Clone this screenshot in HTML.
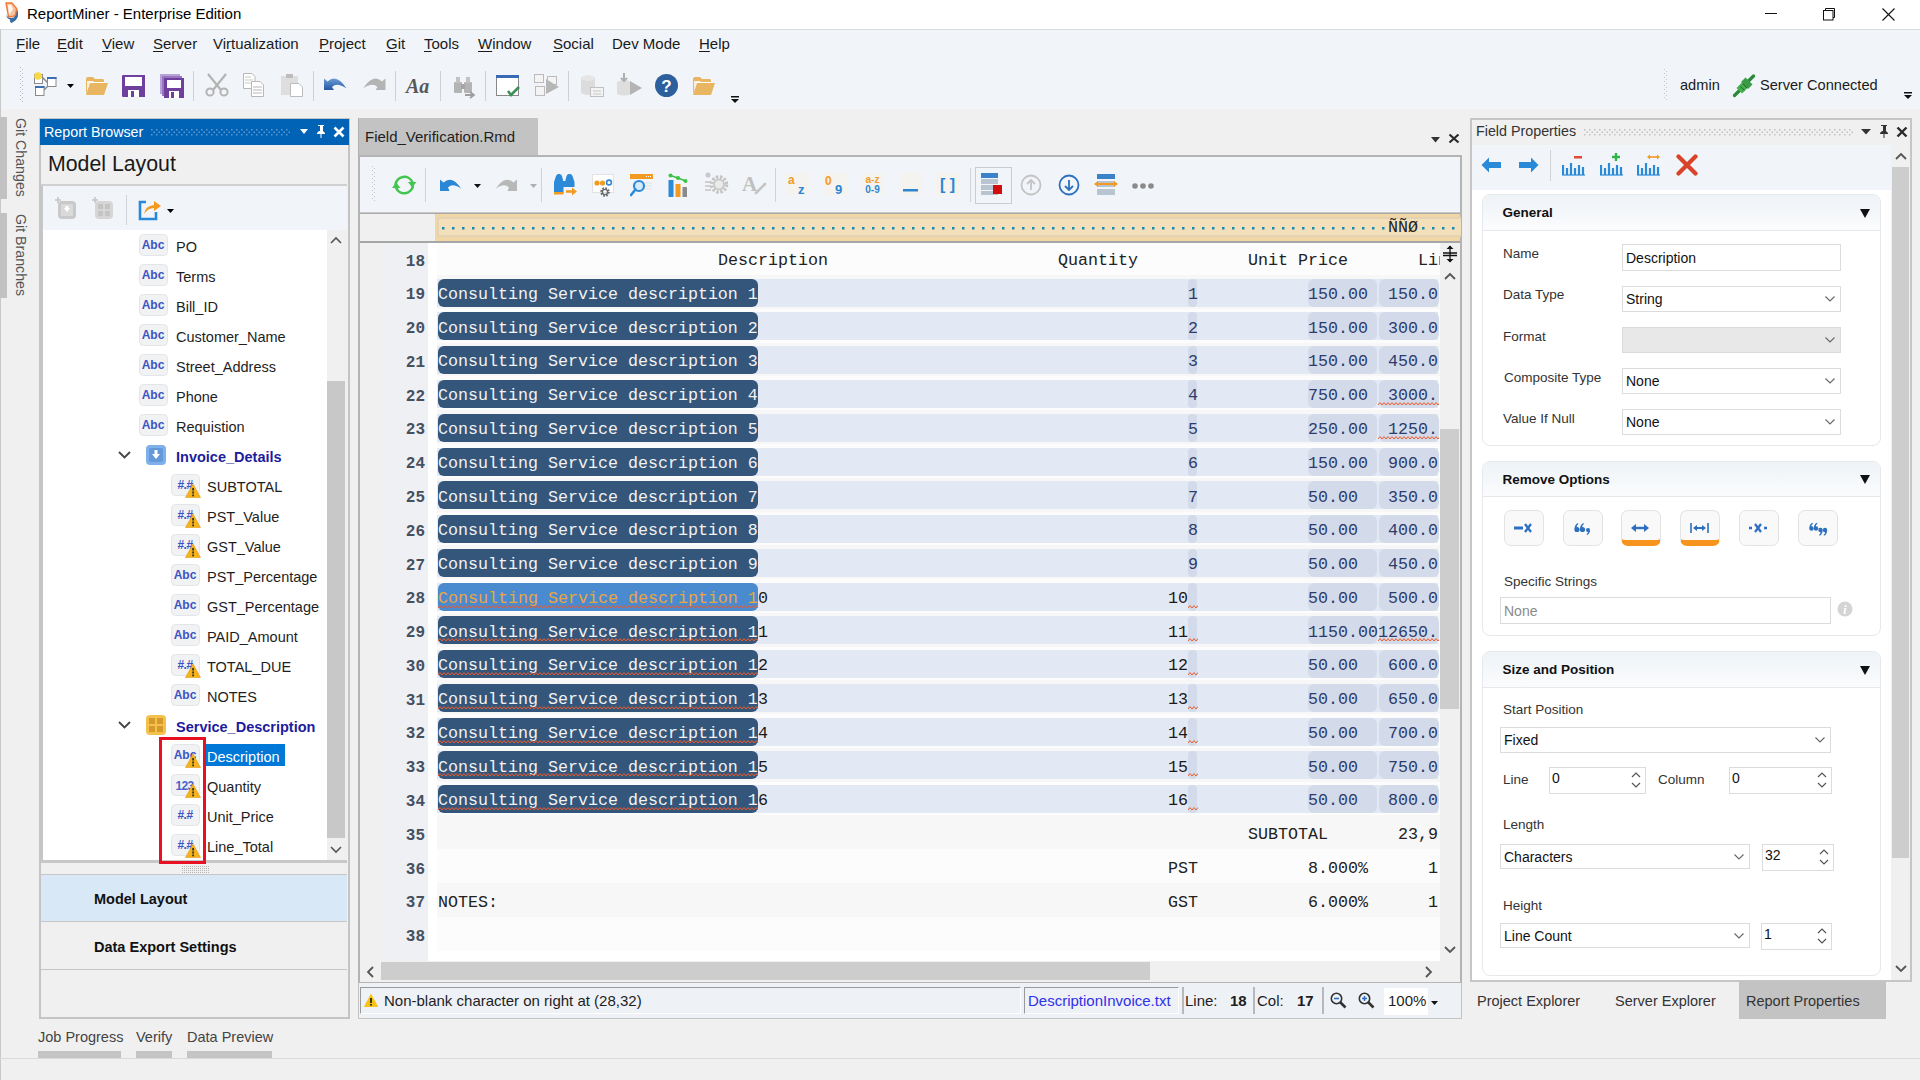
<!DOCTYPE html>
<html><head><meta charset="utf-8">
<style>
*{box-sizing:border-box;margin:0;padding:0}
html,body{width:1920px;height:1080px;overflow:hidden}
body{position:relative;background:#f0f0f0;font-family:"Liberation Sans",sans-serif;font-size:15px;color:#1e1e1e}
.a{position:absolute}
.t{position:absolute;white-space:nowrap;line-height:1}
.mono{font-family:"Liberation Mono",monospace}
u{text-decoration:underline;text-underline-offset:1.5px;text-decoration-thickness:1px}
</style></head><body>

<div class="a" style="left:0px;top:0px;width:1920px;height:29px;background:#fff"></div>
<svg class="a" style="left:0px;top:0px;" width="22" height="26" viewBox="0 0 22 26"><path d="M6 14.5 Q8 19 14 17.5 L17 8 Q18.5 12 18 16.5 Q16 21 11.5 23 Q9.5 22 10 19.5 Q7 19 6 14.5Z" fill="#3b6b9f"/><path d="M6 3 H12 L16.5 8.5 L15.5 15 Q12 17.5 8.5 16.5 Z" fill="#f9c4a0" stroke="#ee7a3c" stroke-width="1.4" stroke-linejoin="round"/><path d="M8 5 H11 L13 9 L10 13.5 L9 15Z" fill="#fff" opacity="0.85"/></svg>
<div class="t" style="left:27px;top:6px;font-size:15px;color:#000;font-weight:normal;">ReportMiner - Enterprise Edition</div>
<div class="a" style="left:1765px;top:13px;width:12px;height:1px;background:#111"></div>
<svg class="a" style="left:1823px;top:8px;" width="13" height="13" viewBox="0 0 13 13"><rect x="0.5" y="2.5" width="9.5" height="9.5" fill="none" stroke="#111"/><path d="M2.5 2.5 V0.5 H11.5 V9.5 H10" fill="none" stroke="#111"/></svg>
<svg class="a" style="left:1882px;top:8px;" width="13" height="13" viewBox="0 0 13 13"><path d="M0.5 0.5 L12.5 12.5 M12.5 0.5 L0.5 12.5" stroke="#111" stroke-width="1.1"/></svg>
<div class="a" style="left:0px;top:29px;width:1920px;height:80px;background:#f1f5f9;border-top:1px solid #d9dcdf"></div>
<div class="a" style="left:0px;top:29px;width:1px;height:1051px;background:#c9c9c9"></div>
<div class="t" style="left:16px;top:36px;font-size:15px;color:#1a1a1a;font-weight:normal;"><u>F</u>ile</div>
<div class="t" style="left:57px;top:36px;font-size:15px;color:#1a1a1a;font-weight:normal;"><u>E</u>dit</div>
<div class="t" style="left:102px;top:36px;font-size:15px;color:#1a1a1a;font-weight:normal;"><u>V</u>iew</div>
<div class="t" style="left:153px;top:36px;font-size:15px;color:#1a1a1a;font-weight:normal;"><u>S</u>erver</div>
<div class="t" style="left:213px;top:36px;font-size:15px;color:#1a1a1a;font-weight:normal;">Vi<u>r</u>tualization</div>
<div class="t" style="left:319px;top:36px;font-size:15px;color:#1a1a1a;font-weight:normal;"><u>P</u>roject</div>
<div class="t" style="left:386px;top:36px;font-size:15px;color:#1a1a1a;font-weight:normal;"><u>G</u>it</div>
<div class="t" style="left:424px;top:36px;font-size:15px;color:#1a1a1a;font-weight:normal;"><u>T</u>ools</div>
<div class="t" style="left:478px;top:36px;font-size:15px;color:#1a1a1a;font-weight:normal;"><u>W</u>indow</div>
<div class="t" style="left:553px;top:36px;font-size:15px;color:#1a1a1a;font-weight:normal;"><u>S</u>ocial</div>
<div class="t" style="left:612px;top:36px;font-size:15px;color:#1a1a1a;font-weight:normal;">Dev Mode</div>
<div class="t" style="left:699px;top:36px;font-size:15px;color:#1a1a1a;font-weight:normal;"><u>H</u>elp</div>
<svg class="a" style="left:20px;top:67px;" width="3" height="36" viewBox="0 0 3 36"><rect x="0" y="0" width="1" height="1" fill="#b8bcc2"/><rect x="2" y="2" width="1" height="1" fill="#b8bcc2"/><rect x="0" y="4" width="1" height="1" fill="#b8bcc2"/><rect x="2" y="6" width="1" height="1" fill="#b8bcc2"/><rect x="0" y="8" width="1" height="1" fill="#b8bcc2"/><rect x="2" y="10" width="1" height="1" fill="#b8bcc2"/><rect x="0" y="12" width="1" height="1" fill="#b8bcc2"/><rect x="2" y="14" width="1" height="1" fill="#b8bcc2"/><rect x="0" y="16" width="1" height="1" fill="#b8bcc2"/><rect x="2" y="18" width="1" height="1" fill="#b8bcc2"/><rect x="0" y="20" width="1" height="1" fill="#b8bcc2"/><rect x="2" y="22" width="1" height="1" fill="#b8bcc2"/><rect x="0" y="24" width="1" height="1" fill="#b8bcc2"/><rect x="2" y="26" width="1" height="1" fill="#b8bcc2"/><rect x="0" y="28" width="1" height="1" fill="#b8bcc2"/><rect x="2" y="30" width="1" height="1" fill="#b8bcc2"/><rect x="0" y="32" width="1" height="1" fill="#b8bcc2"/><rect x="2" y="34" width="1" height="1" fill="#b8bcc2"/></svg>
<svg class="a" style="left:34px;top:72px;" width="24" height="24" viewBox="0 0 24 24">
<rect x="0.5" y="2.5" width="8" height="9" fill="#fff" stroke="#8a8a8a"/>
<circle cx="4" cy="4" r="3.8" fill="#f6d84a"/>
<path d="M8 5 L14 11 M10 18 L14 14" stroke="#8a8a8a" stroke-width="1.5" fill="none"/>
<rect x="13.5" y="5.5" width="8.5" height="9" fill="#fff" stroke="#8a8a8a"/><rect x="13" y="5" width="9.5" height="2" fill="#3a6fb5"/>
<rect x="1.5" y="14.5" width="8.5" height="9" fill="#fff" stroke="#8a8a8a"/><rect x="1" y="14" width="9.5" height="2" fill="#3a6fb5"/>
</svg>
<svg class="a" style="left:67px;top:84px;" width="7" height="4" viewBox="0 0 7 4"><path d="M0 0 H7 L3.5 4 Z" fill="#000"/></svg>
<svg class="a" style="left:85px;top:76px;" width="24" height="20" viewBox="0 0 24 20"><path d="M1 3 Q1 1 3 1 H8 L10 3 H18 Q19 3 19 5 V6 H5 L1 18 Z" fill="#e8b560"/><path d="M2 5 H8 L9 6 H18 V8 H5 L2 15Z" fill="#fff" opacity="0.8"/><path d="M5 7 H23 L19 19 H1 Z" fill="#e8b560"/></svg>
<svg class="a" style="left:122px;top:75px;" width="24" height="23" viewBox="0 0 24 23"><path d="M0 1 Q0 0 1 0 H23 V22 H1 Q0 22 0 21Z" fill="#6e3f9c"/><rect x="3" y="2" width="17" height="9" fill="#fff"/><rect x="6" y="15" width="11" height="7" fill="#fff"/><rect x="9" y="16" width="3" height="6" fill="#6e3f9c"/></svg>
<svg class="a" style="left:160px;top:74px;" width="24" height="24" viewBox="0 0 24 24"><path d="M0 0 H20 V20 H0Z" fill="#b9a3d6"/><path d="M2 2 H22 V22 H2Z" fill="#9777c0"/><path d="M4 4 H24 V24 H4Z" fill="#6e3f9c"/><rect x="7" y="6" width="14" height="8" fill="#fff"/><rect x="9" y="17" width="10" height="7" fill="#fff"/><rect x="11" y="18" width="3" height="6" fill="#6e3f9c"/></svg>
<div class="a" style="left:193px;top:71px;width:1px;height:30px;background:#cdd1d6"></div>
<svg class="a" style="left:205px;top:73px;" width="24" height="24" viewBox="0 0 24 24"><path d="M3 1 L16 17 M21 1 L8 17" stroke="#b3b3b3" stroke-width="2.2"/><circle cx="5" cy="19" r="3.6" fill="none" stroke="#b3b3b3" stroke-width="2"/><circle cx="19" cy="19" r="3.6" fill="none" stroke="#b3b3b3" stroke-width="2"/></svg>
<svg class="a" style="left:243px;top:73px;" width="22" height="24" viewBox="0 0 22 24"><path d="M0.5 0.5 H9 L12 3.5 V15.5 H0.5Z" fill="#fff" stroke="#b8b8b8"/><path d="M2 4 H8 M2 7 H10 M2 10 H10" stroke="#c8c8c8"/><path d="M8.5 8.5 H17 L20.5 12 V23.5 H8.5Z" fill="#fff" stroke="#b8b8b8"/><path d="M10 14 H19 M10 17 H19 M10 20 H19" stroke="#b8b8b8"/></svg>
<svg class="a" style="left:281px;top:73px;" width="23" height="24" viewBox="0 0 23 24"><rect x="0" y="3" width="17" height="19" fill="#dedede"/><rect x="5" y="1" width="7" height="4" fill="#bdbdbd"/><path d="M9.5 10.5 H18 L21.5 14 V23.5 H9.5Z" fill="#fff" stroke="#bdbdbd"/></svg>
<div class="a" style="left:313px;top:71px;width:1px;height:30px;background:#cdd1d6"></div>
<svg class="a" style="left:323px;top:77px;" width="25" height="14" viewBox="0 0 25 14"><defs><linearGradient id="ug" x1="0" y1="0" x2="0" y2="1"><stop offset="0" stop-color="#6a9bd6"/><stop offset="1" stop-color="#2557a3"/></linearGradient></defs><path d="M1 1.5 L4.5 4.5 Q13.5 -4 23.5 11.5 Q14 5 9 10 L11 13 H1 Z" fill="url(#ug)"/></svg>
<svg class="a" style="left:362px;top:77px;" width="25" height="14" viewBox="0 0 25 14"><path d="M23.5 1.5 L20 4.5 Q11 -4 1 11.5 Q10.5 5 15.5 10 L13.5 13 H23.5 Z" fill="#b4b4b4"/></svg>
<div class="a" style="left:395px;top:71px;width:1px;height:30px;background:#cdd1d6"></div>
<div class="t" style="left:406px;top:76px;font-size:20px;color:#585858;font-weight:normal;font-family:'Liberation Serif',serif;"><i><b>Aa</b></i></div>
<div class="a" style="left:440px;top:71px;width:1px;height:30px;background:#cdd1d6"></div>
<svg class="a" style="left:453px;top:76px;" width="23" height="23" viewBox="0 0 23 23"><rect x="1" y="6" width="8" height="11" rx="1" fill="#b4b4b4"/><rect x="11" y="6" width="8" height="11" rx="1" fill="#b4b4b4"/><rect x="3" y="1" width="4" height="6" fill="#c2c2c2"/><rect x="13" y="1" width="4" height="6" fill="#c2c2c2"/><rect x="8" y="8" width="4" height="5" fill="#a5a5a5"/><path d="M12 19 H20 M17 16 L21 19 L17 22" stroke="#9e9e9e" stroke-width="1.8" fill="none"/></svg>
<div class="a" style="left:485px;top:71px;width:1px;height:30px;background:#cdd1d6"></div>
<svg class="a" style="left:496px;top:75px;" width="25" height="22" viewBox="0 0 25 22"><rect x="0.5" y="0.5" width="22" height="20" fill="#fff" stroke="#888"/><rect x="0" y="0" width="23" height="3" fill="#3a6ab3"/><path d="M12 16 L15 20 L23 12" stroke="#3d8f5a" stroke-width="2.6" fill="none"/></svg>
<svg class="a" style="left:534px;top:74px;" width="26" height="23" viewBox="0 0 26 23"><rect x="0.5" y="0.5" width="9" height="8" fill="#f4f4f4" stroke="#bbb"/><rect x="1.5" y="12.5" width="9" height="9" fill="#f4f4f4" stroke="#bbb"/><rect x="13.5" y="2.5" width="9" height="8" fill="#f4f4f4" stroke="#bbb"/><path d="M12 5 L25 13 L12 20Z" fill="#b6b6b6"/></svg>
<div class="a" style="left:568px;top:71px;width:1px;height:30px;background:#cdd1d6"></div>
<svg class="a" style="left:581px;top:74px;" width="24" height="24" viewBox="0 0 24 24"><path d="M0 4 Q7 -1 14 4 V19 Q7 23 0 19Z" fill="#dcdcdc"/><ellipse cx="7" cy="4" rx="7" ry="3" fill="#e6e6e6"/><rect x="9.5" y="13.5" width="13" height="9" fill="#f3f3f3" stroke="#c0c0c0"/><path d="M12 17 H20 M12 20 H20" stroke="#c8c8c8"/></svg>
<svg class="a" style="left:617px;top:73px;" width="25" height="24" viewBox="0 0 25 24"><path d="M0 9 Q7 5 14 9 V21 Q7 24 0 21Z" fill="#dedede"/><path d="M7 0 V8 M4 5 L7 8 L10 5" stroke="#b0b0b0" stroke-width="2" fill="none"/><path d="M13 8 L25 15 L13 22Z" fill="#b4b4b4"/></svg>
<svg class="a" style="left:655px;top:74px;" width="23" height="23" viewBox="0 0 23 23"><circle cx="11.5" cy="11.5" r="11.5" fill="#2d5f9d"/><text x="11.5" y="18" font-family="Liberation Sans" font-weight="bold" font-size="17" text-anchor="middle" fill="#fff">?</text></svg>
<svg class="a" style="left:692px;top:76px;" width="24" height="20" viewBox="0 0 24 20"><path d="M1 3 Q1 1 3 1 H8 L10 3 H18 Q19 3 19 5 V6 H5 L1 18 Z" fill="#e8b560"/><path d="M2 5 H8 L9 6 H18 V8 H5 L2 15Z" fill="#fff" opacity="0.8"/><path d="M5 7 H23 L19 19 H1 Z" fill="#e8b560"/></svg>
<svg class="a" style="left:731px;top:96px;" width="8" height="7" viewBox="0 0 8 7"><rect x="0" y="0" width="8" height="1.5" fill="#111"/><path d="M0 3 H8 L4 7Z" fill="#111"/></svg>
<svg class="a" style="left:1664px;top:69px;" width="3" height="32" viewBox="0 0 3 32"><rect x="0" y="0" width="1" height="1" fill="#c4c7cc"/><rect x="2" y="2" width="1" height="1" fill="#c4c7cc"/><rect x="0" y="4" width="1" height="1" fill="#c4c7cc"/><rect x="2" y="6" width="1" height="1" fill="#c4c7cc"/><rect x="0" y="8" width="1" height="1" fill="#c4c7cc"/><rect x="2" y="10" width="1" height="1" fill="#c4c7cc"/><rect x="0" y="12" width="1" height="1" fill="#c4c7cc"/><rect x="2" y="14" width="1" height="1" fill="#c4c7cc"/><rect x="0" y="16" width="1" height="1" fill="#c4c7cc"/><rect x="2" y="18" width="1" height="1" fill="#c4c7cc"/><rect x="0" y="20" width="1" height="1" fill="#c4c7cc"/><rect x="2" y="22" width="1" height="1" fill="#c4c7cc"/><rect x="0" y="24" width="1" height="1" fill="#c4c7cc"/><rect x="2" y="26" width="1" height="1" fill="#c4c7cc"/><rect x="0" y="28" width="1" height="1" fill="#c4c7cc"/><rect x="2" y="30" width="1" height="1" fill="#c4c7cc"/></svg>
<div class="t" style="left:1680px;top:77.5px;font-size:14.6px;color:#1a1a1a;font-weight:normal;">admin</div>
<svg class="a" style="left:1732px;top:74px;" width="24" height="24" viewBox="0 0 24 24"><path d="M2.5 21.5 L7 17" stroke="#2a8a3a" stroke-width="3.2" stroke-linecap="round"/><path d="M16.5 7 L21.5 2" stroke="#2a8a3a" stroke-width="3.2" stroke-linecap="round"/><path d="M4.5 14 L10 8.5 L15.5 14 L10 19.5Z" fill="#46ad4f"/><path d="M9 8 L13.5 3.5 L20.5 10.5 L16 15Z" fill="#3a9a45"/><path d="M8.5 12.5 L12.5 16.5 M11 10 L15 14" stroke="#1e6628" stroke-width="1"/></svg>
<div class="t" style="left:1760px;top:77.5px;font-size:14.6px;color:#1a1a1a;font-weight:normal;">Server Connected</div>
<svg class="a" style="left:1904px;top:92px;" width="8" height="7" viewBox="0 0 8 7"><rect x="0" y="0" width="8" height="1.5" fill="#111"/><path d="M0 3 H8 L4 7Z" fill="#111"/></svg>
<div class="a" style="left:0px;top:117px;width:7px;height:82px;background:#c2c2c2"></div>
<div class="a" style="left:0px;top:213px;width:7px;height:85px;background:#c2c2c2"></div>
<div class="t" style="left:28px;top:118px;font-size:14.2px;color:#555;transform-origin:0 0;transform:rotate(90deg)">Git Changes</div>
<div class="t" style="left:28px;top:214px;font-size:14.2px;color:#555;transform-origin:0 0;transform:rotate(90deg)">Git Branches</div>
<div class="a" style="left:39px;top:118px;width:311px;height:901px;border:2px solid #c4c4c4;background:#f0f0f0"></div>
<div class="a" style="left:40px;top:119px;width:309px;height:26px;background:#0063b6"></div>
<div class="t" style="left:44px;top:124.5px;font-size:14.3px;color:#fff;font-weight:normal;">Report Browser</div>
<svg class="a" style="left:151px;top:129px;" width="140" height="7" viewBox="0 0 140 7"><rect x="0" y="0" width="1.5" height="1.5" fill="#5f97d2"/><rect x="0" y="5" width="1.5" height="1.5" fill="#5f97d2"/><rect x="2.5" y="2.5" width="1.5" height="1.5" fill="#5f97d2"/><rect x="5" y="0" width="1.5" height="1.5" fill="#5f97d2"/><rect x="5" y="5" width="1.5" height="1.5" fill="#5f97d2"/><rect x="7.5" y="2.5" width="1.5" height="1.5" fill="#5f97d2"/><rect x="10" y="0" width="1.5" height="1.5" fill="#5f97d2"/><rect x="10" y="5" width="1.5" height="1.5" fill="#5f97d2"/><rect x="12.5" y="2.5" width="1.5" height="1.5" fill="#5f97d2"/><rect x="15" y="0" width="1.5" height="1.5" fill="#5f97d2"/><rect x="15" y="5" width="1.5" height="1.5" fill="#5f97d2"/><rect x="17.5" y="2.5" width="1.5" height="1.5" fill="#5f97d2"/><rect x="20" y="0" width="1.5" height="1.5" fill="#5f97d2"/><rect x="20" y="5" width="1.5" height="1.5" fill="#5f97d2"/><rect x="22.5" y="2.5" width="1.5" height="1.5" fill="#5f97d2"/><rect x="25" y="0" width="1.5" height="1.5" fill="#5f97d2"/><rect x="25" y="5" width="1.5" height="1.5" fill="#5f97d2"/><rect x="27.5" y="2.5" width="1.5" height="1.5" fill="#5f97d2"/><rect x="30" y="0" width="1.5" height="1.5" fill="#5f97d2"/><rect x="30" y="5" width="1.5" height="1.5" fill="#5f97d2"/><rect x="32.5" y="2.5" width="1.5" height="1.5" fill="#5f97d2"/><rect x="35" y="0" width="1.5" height="1.5" fill="#5f97d2"/><rect x="35" y="5" width="1.5" height="1.5" fill="#5f97d2"/><rect x="37.5" y="2.5" width="1.5" height="1.5" fill="#5f97d2"/><rect x="40" y="0" width="1.5" height="1.5" fill="#5f97d2"/><rect x="40" y="5" width="1.5" height="1.5" fill="#5f97d2"/><rect x="42.5" y="2.5" width="1.5" height="1.5" fill="#5f97d2"/><rect x="45" y="0" width="1.5" height="1.5" fill="#5f97d2"/><rect x="45" y="5" width="1.5" height="1.5" fill="#5f97d2"/><rect x="47.5" y="2.5" width="1.5" height="1.5" fill="#5f97d2"/><rect x="50" y="0" width="1.5" height="1.5" fill="#5f97d2"/><rect x="50" y="5" width="1.5" height="1.5" fill="#5f97d2"/><rect x="52.5" y="2.5" width="1.5" height="1.5" fill="#5f97d2"/><rect x="55" y="0" width="1.5" height="1.5" fill="#5f97d2"/><rect x="55" y="5" width="1.5" height="1.5" fill="#5f97d2"/><rect x="57.5" y="2.5" width="1.5" height="1.5" fill="#5f97d2"/><rect x="60" y="0" width="1.5" height="1.5" fill="#5f97d2"/><rect x="60" y="5" width="1.5" height="1.5" fill="#5f97d2"/><rect x="62.5" y="2.5" width="1.5" height="1.5" fill="#5f97d2"/><rect x="65" y="0" width="1.5" height="1.5" fill="#5f97d2"/><rect x="65" y="5" width="1.5" height="1.5" fill="#5f97d2"/><rect x="67.5" y="2.5" width="1.5" height="1.5" fill="#5f97d2"/><rect x="70" y="0" width="1.5" height="1.5" fill="#5f97d2"/><rect x="70" y="5" width="1.5" height="1.5" fill="#5f97d2"/><rect x="72.5" y="2.5" width="1.5" height="1.5" fill="#5f97d2"/><rect x="75" y="0" width="1.5" height="1.5" fill="#5f97d2"/><rect x="75" y="5" width="1.5" height="1.5" fill="#5f97d2"/><rect x="77.5" y="2.5" width="1.5" height="1.5" fill="#5f97d2"/><rect x="80" y="0" width="1.5" height="1.5" fill="#5f97d2"/><rect x="80" y="5" width="1.5" height="1.5" fill="#5f97d2"/><rect x="82.5" y="2.5" width="1.5" height="1.5" fill="#5f97d2"/><rect x="85" y="0" width="1.5" height="1.5" fill="#5f97d2"/><rect x="85" y="5" width="1.5" height="1.5" fill="#5f97d2"/><rect x="87.5" y="2.5" width="1.5" height="1.5" fill="#5f97d2"/><rect x="90" y="0" width="1.5" height="1.5" fill="#5f97d2"/><rect x="90" y="5" width="1.5" height="1.5" fill="#5f97d2"/><rect x="92.5" y="2.5" width="1.5" height="1.5" fill="#5f97d2"/><rect x="95" y="0" width="1.5" height="1.5" fill="#5f97d2"/><rect x="95" y="5" width="1.5" height="1.5" fill="#5f97d2"/><rect x="97.5" y="2.5" width="1.5" height="1.5" fill="#5f97d2"/><rect x="100" y="0" width="1.5" height="1.5" fill="#5f97d2"/><rect x="100" y="5" width="1.5" height="1.5" fill="#5f97d2"/><rect x="102.5" y="2.5" width="1.5" height="1.5" fill="#5f97d2"/><rect x="105" y="0" width="1.5" height="1.5" fill="#5f97d2"/><rect x="105" y="5" width="1.5" height="1.5" fill="#5f97d2"/><rect x="107.5" y="2.5" width="1.5" height="1.5" fill="#5f97d2"/><rect x="110" y="0" width="1.5" height="1.5" fill="#5f97d2"/><rect x="110" y="5" width="1.5" height="1.5" fill="#5f97d2"/><rect x="112.5" y="2.5" width="1.5" height="1.5" fill="#5f97d2"/><rect x="115" y="0" width="1.5" height="1.5" fill="#5f97d2"/><rect x="115" y="5" width="1.5" height="1.5" fill="#5f97d2"/><rect x="117.5" y="2.5" width="1.5" height="1.5" fill="#5f97d2"/><rect x="120" y="0" width="1.5" height="1.5" fill="#5f97d2"/><rect x="120" y="5" width="1.5" height="1.5" fill="#5f97d2"/><rect x="122.5" y="2.5" width="1.5" height="1.5" fill="#5f97d2"/><rect x="125" y="0" width="1.5" height="1.5" fill="#5f97d2"/><rect x="125" y="5" width="1.5" height="1.5" fill="#5f97d2"/><rect x="127.5" y="2.5" width="1.5" height="1.5" fill="#5f97d2"/><rect x="130" y="0" width="1.5" height="1.5" fill="#5f97d2"/><rect x="130" y="5" width="1.5" height="1.5" fill="#5f97d2"/><rect x="132.5" y="2.5" width="1.5" height="1.5" fill="#5f97d2"/><rect x="135" y="0" width="1.5" height="1.5" fill="#5f97d2"/><rect x="135" y="5" width="1.5" height="1.5" fill="#5f97d2"/><rect x="137.5" y="2.5" width="1.5" height="1.5" fill="#5f97d2"/></svg>
<svg class="a" style="left:300px;top:129px;" width="8" height="6" viewBox="0 0 8 6"><path d="M0 0 H8 L4 5Z" fill="#fff"/></svg>
<svg class="a" style="left:316px;top:125px;" width="10" height="13" viewBox="0 0 10 13"><path d="M2 0 H8 V1 H7 V6 L9 8 V9 H1 V8 L3 6 V1 H2Z" fill="#fff"/><path d="M3.5 1 V6" stroke="#0063b6"/><rect x="4.5" y="9" width="1" height="4" fill="#fff"/></svg>
<svg class="a" style="left:333px;top:126px;" width="12" height="12" viewBox="0 0 12 12"><path d="M1.5 1.5 L10.5 10.5 M10.5 1.5 L1.5 10.5" stroke="#fff" stroke-width="2.6"/></svg>
<div class="t" style="left:48px;top:154px;font-size:21.3px;color:#1a1a1a;font-weight:normal;">Model Layout</div>
<div class="a" style="left:41px;top:184px;width:306px;height:2px;background:#d0d0d0"></div>
<div class="a" style="left:41px;top:186px;width:2px;height:676px;background:#c6c6c6"></div>
<div class="a" style="left:43px;top:186px;width:304px;height:44px;background:#f1f5f9"></div>
<svg class="a" style="left:55px;top:197px;" width="23" height="24" viewBox="0 0 23 24"><rect x="3" y="4" width="18" height="18" rx="4" fill="#c9c9c9"/><rect x="6" y="7" width="12" height="12" rx="1" fill="#dadada"/><path d="M9 11 H15 L12 15Z" fill="#fff"/><rect x="10.5" y="9" width="3" height="3" fill="#fff"/><path d="M0 3 H6 M3 0 V6" stroke="#c4c4c4" stroke-width="1.5"/></svg>
<svg class="a" style="left:92px;top:197px;" width="23" height="24" viewBox="0 0 23 24"><rect x="3" y="4" width="18" height="18" rx="4" fill="#d6d6d6"/><rect x="6" y="7" width="5" height="5" fill="#c4c4c4"/><rect x="13" y="7" width="5" height="5" fill="#c4c4c4"/><rect x="6" y="14" width="5" height="5" fill="#c4c4c4"/><rect x="13" y="14" width="5" height="5" fill="#c4c4c4"/><path d="M0 3 H6 M3 0 V6" stroke="#c4c4c4" stroke-width="1.5"/></svg>
<div class="a" style="left:126px;top:195px;width:1px;height:30px;background:#d0d4d8"></div>
<svg class="a" style="left:138px;top:199px;" width="25" height="22" viewBox="0 0 25 22"><path d="M8 3 H2 V20 H18 V13" stroke="#2a88d8" stroke-width="2.6" fill="none"/><path d="M6 15 Q7 7 16 6 V2 L23 7 L16 12 V9 Q10 9 6 15Z" fill="#f39a1e"/></svg>
<svg class="a" style="left:167px;top:209px;" width="7" height="4" viewBox="0 0 7 4"><path d="M0 0 H7 L3.5 4 Z" fill="#000"/></svg>
<div class="a" style="left:43px;top:230px;width:284px;height:630px;background:#fff"></div>
<div class="a" style="left:327px;top:230px;width:20px;height:630px;background:#f0f0f0"></div>
<div class="a" style="left:327px;top:381px;width:18px;height:457px;background:#c8c8c8"></div>
<svg class="a" style="left:330px;top:236px;" width="12" height="8" viewBox="0 0 12 8"><path d="M1 7 L6 2 L11 7" stroke="#555" stroke-width="1.6" fill="none"/></svg>
<svg class="a" style="left:330px;top:846px;" width="12" height="8" viewBox="0 0 12 8"><path d="M1 1 L6 6 L11 1" stroke="#555" stroke-width="1.6" fill="none"/></svg>
<div class="a" style="left:41px;top:860px;width:306px;height:3px;background:#c8c8c8"></div>
<svg class="a" style="left:182px;top:866px;" width="28" height="7" viewBox="0 0 28 7"><rect x="0" y="0" width="1" height="1" fill="#b4b4b4"/><rect x="0" y="2" width="1" height="1" fill="#b4b4b4"/><rect x="0" y="4" width="1" height="1" fill="#b4b4b4"/><rect x="0" y="6" width="1" height="1" fill="#b4b4b4"/><rect x="2" y="0" width="1" height="1" fill="#b4b4b4"/><rect x="2" y="2" width="1" height="1" fill="#b4b4b4"/><rect x="2" y="4" width="1" height="1" fill="#b4b4b4"/><rect x="2" y="6" width="1" height="1" fill="#b4b4b4"/><rect x="4" y="0" width="1" height="1" fill="#b4b4b4"/><rect x="4" y="2" width="1" height="1" fill="#b4b4b4"/><rect x="4" y="4" width="1" height="1" fill="#b4b4b4"/><rect x="4" y="6" width="1" height="1" fill="#b4b4b4"/><rect x="6" y="0" width="1" height="1" fill="#b4b4b4"/><rect x="6" y="2" width="1" height="1" fill="#b4b4b4"/><rect x="6" y="4" width="1" height="1" fill="#b4b4b4"/><rect x="6" y="6" width="1" height="1" fill="#b4b4b4"/><rect x="8" y="0" width="1" height="1" fill="#b4b4b4"/><rect x="8" y="2" width="1" height="1" fill="#b4b4b4"/><rect x="8" y="4" width="1" height="1" fill="#b4b4b4"/><rect x="8" y="6" width="1" height="1" fill="#b4b4b4"/><rect x="10" y="0" width="1" height="1" fill="#b4b4b4"/><rect x="10" y="2" width="1" height="1" fill="#b4b4b4"/><rect x="10" y="4" width="1" height="1" fill="#b4b4b4"/><rect x="10" y="6" width="1" height="1" fill="#b4b4b4"/><rect x="12" y="0" width="1" height="1" fill="#b4b4b4"/><rect x="12" y="2" width="1" height="1" fill="#b4b4b4"/><rect x="12" y="4" width="1" height="1" fill="#b4b4b4"/><rect x="12" y="6" width="1" height="1" fill="#b4b4b4"/><rect x="14" y="0" width="1" height="1" fill="#b4b4b4"/><rect x="14" y="2" width="1" height="1" fill="#b4b4b4"/><rect x="14" y="4" width="1" height="1" fill="#b4b4b4"/><rect x="14" y="6" width="1" height="1" fill="#b4b4b4"/><rect x="16" y="0" width="1" height="1" fill="#b4b4b4"/><rect x="16" y="2" width="1" height="1" fill="#b4b4b4"/><rect x="16" y="4" width="1" height="1" fill="#b4b4b4"/><rect x="16" y="6" width="1" height="1" fill="#b4b4b4"/><rect x="18" y="0" width="1" height="1" fill="#b4b4b4"/><rect x="18" y="2" width="1" height="1" fill="#b4b4b4"/><rect x="18" y="4" width="1" height="1" fill="#b4b4b4"/><rect x="18" y="6" width="1" height="1" fill="#b4b4b4"/><rect x="20" y="0" width="1" height="1" fill="#b4b4b4"/><rect x="20" y="2" width="1" height="1" fill="#b4b4b4"/><rect x="20" y="4" width="1" height="1" fill="#b4b4b4"/><rect x="20" y="6" width="1" height="1" fill="#b4b4b4"/><rect x="22" y="0" width="1" height="1" fill="#b4b4b4"/><rect x="22" y="2" width="1" height="1" fill="#b4b4b4"/><rect x="22" y="4" width="1" height="1" fill="#b4b4b4"/><rect x="22" y="6" width="1" height="1" fill="#b4b4b4"/><rect x="24" y="0" width="1" height="1" fill="#b4b4b4"/><rect x="24" y="2" width="1" height="1" fill="#b4b4b4"/><rect x="24" y="4" width="1" height="1" fill="#b4b4b4"/><rect x="24" y="6" width="1" height="1" fill="#b4b4b4"/><rect x="26" y="0" width="1" height="1" fill="#b4b4b4"/><rect x="26" y="2" width="1" height="1" fill="#b4b4b4"/><rect x="26" y="4" width="1" height="1" fill="#b4b4b4"/><rect x="26" y="6" width="1" height="1" fill="#b4b4b4"/></svg>
<div class="a" style="left:41px;top:874px;width:306px;height:1px;background:#c6c6c6"></div>
<div class="a" style="left:41px;top:875px;width:306px;height:47px;background:#d9e8f7"></div>
<div class="a" style="left:41px;top:921px;width:306px;height:1px;background:#c6c6c6"></div>
<div class="t" style="left:94px;top:892px;font-size:14.5px;color:#111;font-weight:bold;">Model Layout</div>
<div class="t" style="left:94px;top:940px;font-size:14.5px;color:#111;font-weight:bold;">Data Export Settings</div>
<div class="a" style="left:41px;top:969px;width:306px;height:1px;background:#c6c6c6"></div>
<svg class="a" style="left:139px;top:234px;overflow:visible" width="32" height="24" viewBox="0 0 32 24"><rect x="0.5" y="0.5" width="28" height="21" rx="4" fill="#f1f2f4" stroke="#e4e5e8"/><text x="14" y="15" font-family="Liberation Sans" font-weight="bold" font-size="12" text-anchor="middle" fill="#3b55c4">Abc</text></svg>
<div class="t" style="left:176px;top:239.5px;font-size:14.5px;color:#1e1e1e;font-weight:normal;">PO</div>
<svg class="a" style="left:139px;top:264px;overflow:visible" width="32" height="24" viewBox="0 0 32 24"><rect x="0.5" y="0.5" width="28" height="21" rx="4" fill="#f1f2f4" stroke="#e4e5e8"/><text x="14" y="15" font-family="Liberation Sans" font-weight="bold" font-size="12" text-anchor="middle" fill="#3b55c4">Abc</text></svg>
<div class="t" style="left:176px;top:269.5px;font-size:14.5px;color:#1e1e1e;font-weight:normal;">Terms</div>
<svg class="a" style="left:139px;top:294px;overflow:visible" width="32" height="24" viewBox="0 0 32 24"><rect x="0.5" y="0.5" width="28" height="21" rx="4" fill="#f1f2f4" stroke="#e4e5e8"/><text x="14" y="15" font-family="Liberation Sans" font-weight="bold" font-size="12" text-anchor="middle" fill="#3b55c4">Abc</text></svg>
<div class="t" style="left:176px;top:299.5px;font-size:14.5px;color:#1e1e1e;font-weight:normal;">Bill_ID</div>
<svg class="a" style="left:139px;top:324px;overflow:visible" width="32" height="24" viewBox="0 0 32 24"><rect x="0.5" y="0.5" width="28" height="21" rx="4" fill="#f1f2f4" stroke="#e4e5e8"/><text x="14" y="15" font-family="Liberation Sans" font-weight="bold" font-size="12" text-anchor="middle" fill="#3b55c4">Abc</text></svg>
<div class="t" style="left:176px;top:329.5px;font-size:14.5px;color:#1e1e1e;font-weight:normal;">Customer_Name</div>
<svg class="a" style="left:139px;top:354px;overflow:visible" width="32" height="24" viewBox="0 0 32 24"><rect x="0.5" y="0.5" width="28" height="21" rx="4" fill="#f1f2f4" stroke="#e4e5e8"/><text x="14" y="15" font-family="Liberation Sans" font-weight="bold" font-size="12" text-anchor="middle" fill="#3b55c4">Abc</text></svg>
<div class="t" style="left:176px;top:359.5px;font-size:14.5px;color:#1e1e1e;font-weight:normal;">Street_Address</div>
<svg class="a" style="left:139px;top:384px;overflow:visible" width="32" height="24" viewBox="0 0 32 24"><rect x="0.5" y="0.5" width="28" height="21" rx="4" fill="#f1f2f4" stroke="#e4e5e8"/><text x="14" y="15" font-family="Liberation Sans" font-weight="bold" font-size="12" text-anchor="middle" fill="#3b55c4">Abc</text></svg>
<div class="t" style="left:176px;top:389.5px;font-size:14.5px;color:#1e1e1e;font-weight:normal;">Phone</div>
<svg class="a" style="left:139px;top:414px;overflow:visible" width="32" height="24" viewBox="0 0 32 24"><rect x="0.5" y="0.5" width="28" height="21" rx="4" fill="#f1f2f4" stroke="#e4e5e8"/><text x="14" y="15" font-family="Liberation Sans" font-weight="bold" font-size="12" text-anchor="middle" fill="#3b55c4">Abc</text></svg>
<div class="t" style="left:176px;top:419.5px;font-size:14.5px;color:#1e1e1e;font-weight:normal;">Requistion</div>
<svg class="a" style="left:118px;top:451px;" width="13" height="8" viewBox="0 0 13 8"><path d="M1 1 L6.5 6.5 L12 1" stroke="#444" stroke-width="1.8" fill="none"/></svg>
<svg class="a" style="left:146px;top:445px;" width="21" height="21" viewBox="0 0 21 21"><rect x="0" y="0" width="20" height="20" rx="4" fill="#7fb0ea"/><rect x="3" y="3" width="14" height="14" rx="2" fill="#6598d8"/><path d="M6 9 H14 L10 14Z" fill="#fff"/><rect x="8.5" y="5" width="3" height="5" fill="#fff"/></svg>
<div class="t" style="left:176px;top:449.5px;font-size:14.5px;color:#1c1c9c;font-weight:bold;">Invoice_Details</div>
<svg class="a" style="left:171px;top:474px;overflow:visible" width="32" height="24" viewBox="0 0 32 24"><rect x="0.5" y="0.5" width="28" height="21" rx="4" fill="#f1f2f4" stroke="#e4e5e8"/><text x="14" y="15" font-family="Liberation Sans" font-weight="bold" font-size="12" text-anchor="middle" fill="#3b55c4" letter-spacing="-0.5">#.#</text><path d="M22 10 L29.5 23.5 H14.5 Z" fill="#f5b21a" stroke="#e09a10" stroke-width="0.6" stroke-linejoin="round"/><rect x="21.2" y="14" width="1.8" height="2.5" fill="#333"/><rect x="21.2" y="17.5" width="1.8" height="2" fill="#333"/><rect x="21.2" y="20.5" width="1.8" height="1.8" fill="#333"/></svg>
<div class="t" style="left:207px;top:479.5px;font-size:14.5px;color:#1e1e1e;font-weight:normal;">SUBTOTAL</div>
<svg class="a" style="left:171px;top:504px;overflow:visible" width="32" height="24" viewBox="0 0 32 24"><rect x="0.5" y="0.5" width="28" height="21" rx="4" fill="#f1f2f4" stroke="#e4e5e8"/><text x="14" y="15" font-family="Liberation Sans" font-weight="bold" font-size="12" text-anchor="middle" fill="#3b55c4" letter-spacing="-0.5">#.#</text><path d="M22 10 L29.5 23.5 H14.5 Z" fill="#f5b21a" stroke="#e09a10" stroke-width="0.6" stroke-linejoin="round"/><rect x="21.2" y="14" width="1.8" height="2.5" fill="#333"/><rect x="21.2" y="17.5" width="1.8" height="2" fill="#333"/><rect x="21.2" y="20.5" width="1.8" height="1.8" fill="#333"/></svg>
<div class="t" style="left:207px;top:509.5px;font-size:14.5px;color:#1e1e1e;font-weight:normal;">PST_Value</div>
<svg class="a" style="left:171px;top:534px;overflow:visible" width="32" height="24" viewBox="0 0 32 24"><rect x="0.5" y="0.5" width="28" height="21" rx="4" fill="#f1f2f4" stroke="#e4e5e8"/><text x="14" y="15" font-family="Liberation Sans" font-weight="bold" font-size="12" text-anchor="middle" fill="#3b55c4" letter-spacing="-0.5">#.#</text><path d="M22 10 L29.5 23.5 H14.5 Z" fill="#f5b21a" stroke="#e09a10" stroke-width="0.6" stroke-linejoin="round"/><rect x="21.2" y="14" width="1.8" height="2.5" fill="#333"/><rect x="21.2" y="17.5" width="1.8" height="2" fill="#333"/><rect x="21.2" y="20.5" width="1.8" height="1.8" fill="#333"/></svg>
<div class="t" style="left:207px;top:539.5px;font-size:14.5px;color:#1e1e1e;font-weight:normal;">GST_Value</div>
<svg class="a" style="left:171px;top:564px;overflow:visible" width="32" height="24" viewBox="0 0 32 24"><rect x="0.5" y="0.5" width="28" height="21" rx="4" fill="#f1f2f4" stroke="#e4e5e8"/><text x="14" y="15" font-family="Liberation Sans" font-weight="bold" font-size="12" text-anchor="middle" fill="#3b55c4">Abc</text></svg>
<div class="t" style="left:207px;top:569.5px;font-size:14.5px;color:#1e1e1e;font-weight:normal;">PST_Percentage</div>
<svg class="a" style="left:171px;top:594px;overflow:visible" width="32" height="24" viewBox="0 0 32 24"><rect x="0.5" y="0.5" width="28" height="21" rx="4" fill="#f1f2f4" stroke="#e4e5e8"/><text x="14" y="15" font-family="Liberation Sans" font-weight="bold" font-size="12" text-anchor="middle" fill="#3b55c4">Abc</text></svg>
<div class="t" style="left:207px;top:599.5px;font-size:14.5px;color:#1e1e1e;font-weight:normal;">GST_Percentage</div>
<svg class="a" style="left:171px;top:624px;overflow:visible" width="32" height="24" viewBox="0 0 32 24"><rect x="0.5" y="0.5" width="28" height="21" rx="4" fill="#f1f2f4" stroke="#e4e5e8"/><text x="14" y="15" font-family="Liberation Sans" font-weight="bold" font-size="12" text-anchor="middle" fill="#3b55c4">Abc</text></svg>
<div class="t" style="left:207px;top:629.5px;font-size:14.5px;color:#1e1e1e;font-weight:normal;">PAID_Amount</div>
<svg class="a" style="left:171px;top:654px;overflow:visible" width="32" height="24" viewBox="0 0 32 24"><rect x="0.5" y="0.5" width="28" height="21" rx="4" fill="#f1f2f4" stroke="#e4e5e8"/><text x="14" y="15" font-family="Liberation Sans" font-weight="bold" font-size="12" text-anchor="middle" fill="#3b55c4" letter-spacing="-0.5">#.#</text><path d="M22 10 L29.5 23.5 H14.5 Z" fill="#f5b21a" stroke="#e09a10" stroke-width="0.6" stroke-linejoin="round"/><rect x="21.2" y="14" width="1.8" height="2.5" fill="#333"/><rect x="21.2" y="17.5" width="1.8" height="2" fill="#333"/><rect x="21.2" y="20.5" width="1.8" height="1.8" fill="#333"/></svg>
<div class="t" style="left:207px;top:659.5px;font-size:14.5px;color:#1e1e1e;font-weight:normal;">TOTAL_DUE</div>
<svg class="a" style="left:171px;top:684px;overflow:visible" width="32" height="24" viewBox="0 0 32 24"><rect x="0.5" y="0.5" width="28" height="21" rx="4" fill="#f1f2f4" stroke="#e4e5e8"/><text x="14" y="15" font-family="Liberation Sans" font-weight="bold" font-size="12" text-anchor="middle" fill="#3b55c4">Abc</text></svg>
<div class="t" style="left:207px;top:689.5px;font-size:14.5px;color:#1e1e1e;font-weight:normal;">NOTES</div>
<svg class="a" style="left:118px;top:721px;" width="13" height="8" viewBox="0 0 13 8"><path d="M1 1 L6.5 6.5 L12 1" stroke="#444" stroke-width="1.8" fill="none"/></svg>
<svg class="a" style="left:146px;top:715px;" width="21" height="21" viewBox="0 0 21 21"><rect x="0" y="0" width="20" height="20" rx="4" fill="#f5c14e"/><rect x="3" y="3" width="6" height="6" fill="#d69a2a"/><rect x="11" y="3" width="6" height="6" fill="#d69a2a"/><rect x="3" y="11" width="6" height="6" fill="#d69a2a"/><rect x="11" y="11" width="6" height="6" fill="#d69a2a"/></svg>
<div class="t" style="left:176px;top:719.5px;font-size:14.5px;color:#1c1c9c;font-weight:bold;">Service_Description</div>
<svg class="a" style="left:171px;top:744px;overflow:visible" width="32" height="24" viewBox="0 0 32 24"><rect x="0.5" y="0.5" width="28" height="21" rx="4" fill="#f1f2f4" stroke="#e4e5e8"/><text x="14" y="15" font-family="Liberation Sans" font-weight="bold" font-size="12" text-anchor="middle" fill="#3b55c4">Abc</text><path d="M22 10 L29.5 23.5 H14.5 Z" fill="#f5b21a" stroke="#e09a10" stroke-width="0.6" stroke-linejoin="round"/><rect x="21.2" y="14" width="1.8" height="2.5" fill="#333"/><rect x="21.2" y="17.5" width="1.8" height="2" fill="#333"/><rect x="21.2" y="20.5" width="1.8" height="1.8" fill="#333"/></svg>
<div class="a" style="left:205px;top:744px;width:80px;height:22px;background:#0078d7"></div>
<div class="t" style="left:207px;top:749.5px;font-size:14.5px;color:#fff;font-weight:normal;">Description</div>
<svg class="a" style="left:171px;top:774px;overflow:visible" width="32" height="24" viewBox="0 0 32 24"><rect x="0.5" y="0.5" width="28" height="21" rx="4" fill="#f1f2f4" stroke="#e4e5e8"/><text x="13.5" y="15.5" font-family="Liberation Sans" font-weight="bold" font-size="12" text-anchor="middle" fill="#4a63c8" letter-spacing="-0.6">123</text><path d="M22 10 L29.5 23.5 H14.5 Z" fill="#f5b21a" stroke="#e09a10" stroke-width="0.6" stroke-linejoin="round"/><rect x="21.2" y="14" width="1.8" height="2.5" fill="#333"/><rect x="21.2" y="17.5" width="1.8" height="2" fill="#333"/><rect x="21.2" y="20.5" width="1.8" height="1.8" fill="#333"/></svg>
<div class="t" style="left:207px;top:779.5px;font-size:14.5px;color:#1e1e1e;font-weight:normal;">Quantity</div>
<svg class="a" style="left:171px;top:804px;overflow:visible" width="32" height="24" viewBox="0 0 32 24"><rect x="0.5" y="0.5" width="28" height="21" rx="4" fill="#f1f2f4" stroke="#e4e5e8"/><text x="14" y="15" font-family="Liberation Sans" font-weight="bold" font-size="12" text-anchor="middle" fill="#3b55c4" letter-spacing="-0.5">#.#</text></svg>
<div class="t" style="left:207px;top:809.5px;font-size:14.5px;color:#1e1e1e;font-weight:normal;">Unit_Price</div>
<svg class="a" style="left:171px;top:834px;overflow:visible" width="32" height="24" viewBox="0 0 32 24"><rect x="0.5" y="0.5" width="28" height="21" rx="4" fill="#f1f2f4" stroke="#e4e5e8"/><text x="14" y="15" font-family="Liberation Sans" font-weight="bold" font-size="12" text-anchor="middle" fill="#3b55c4" letter-spacing="-0.5">#.#</text><path d="M22 10 L29.5 23.5 H14.5 Z" fill="#f5b21a" stroke="#e09a10" stroke-width="0.6" stroke-linejoin="round"/><rect x="21.2" y="14" width="1.8" height="2.5" fill="#333"/><rect x="21.2" y="17.5" width="1.8" height="2" fill="#333"/><rect x="21.2" y="20.5" width="1.8" height="1.8" fill="#333"/></svg>
<div class="t" style="left:207px;top:839.5px;font-size:14.5px;color:#1e1e1e;font-weight:normal;">Line_Total</div>
<div class="a" style="left:159px;top:737px;width:47px;height:127px;border:3px solid #e81123"></div>
<div class="a" style="left:358px;top:118px;width:180px;height:39px;background:#c3c3c3;border-left:1px solid #b0b0b0"></div>
<div class="t" style="left:365px;top:129px;font-size:15px;color:#1e1e1e;font-weight:normal;">Field_Verification.Rmd</div>
<svg class="a" style="left:1431px;top:137px;" width="9" height="6" viewBox="0 0 9 6"><path d="M0 0 H9 L4.5 5.5Z" fill="#333"/></svg>
<svg class="a" style="left:1448px;top:133px;" width="12" height="11" viewBox="0 0 12 11"><path d="M1.5 1.5 L10.5 9.5 M10.5 1.5 L1.5 9.5" stroke="#2a2a2a" stroke-width="2.2"/></svg>
<div class="a" style="left:358px;top:155px;width:104px;height:2px;background:#c6c6c6"></div>
<div class="a" style="left:358px;top:155px;width:1104px;height:829px;border:2px solid #b4b4b4;background:#fff"></div>
<div class="a" style="left:360px;top:157px;width:1100px;height:56px;background:#f1f5f9"></div>
<div class="a" style="left:360px;top:212px;width:1100px;height:1px;background:#c9c9c9"></div>
<svg class="a" style="left:372px;top:166px;" width="3" height="36" viewBox="0 0 3 36"><rect x="0" y="0" width="1" height="1" fill="#c4c7cc"/><rect x="2" y="2" width="1" height="1" fill="#c4c7cc"/><rect x="0" y="4" width="1" height="1" fill="#c4c7cc"/><rect x="2" y="6" width="1" height="1" fill="#c4c7cc"/><rect x="0" y="8" width="1" height="1" fill="#c4c7cc"/><rect x="2" y="10" width="1" height="1" fill="#c4c7cc"/><rect x="0" y="12" width="1" height="1" fill="#c4c7cc"/><rect x="2" y="14" width="1" height="1" fill="#c4c7cc"/><rect x="0" y="16" width="1" height="1" fill="#c4c7cc"/><rect x="2" y="18" width="1" height="1" fill="#c4c7cc"/><rect x="0" y="20" width="1" height="1" fill="#c4c7cc"/><rect x="2" y="22" width="1" height="1" fill="#c4c7cc"/><rect x="0" y="24" width="1" height="1" fill="#c4c7cc"/><rect x="2" y="26" width="1" height="1" fill="#c4c7cc"/><rect x="0" y="28" width="1" height="1" fill="#c4c7cc"/><rect x="2" y="30" width="1" height="1" fill="#c4c7cc"/><rect x="0" y="32" width="1" height="1" fill="#c4c7cc"/><rect x="2" y="34" width="1" height="1" fill="#c4c7cc"/></svg>
<svg class="a" style="left:392px;top:173px;" width="25" height="24" viewBox="0 0 25 24"><path d="M3.5 12 A8.8 8.8 0 0 1 20.5 9.5" stroke="#43c54f" stroke-width="2.6" fill="none"/><path d="M16 9 L24.5 9 L20.2 14.5Z" fill="#43c54f"/><path d="M21 12.5 A8.8 8.8 0 0 1 4 14.5" stroke="#43c54f" stroke-width="2.6" fill="none"/><path d="M0 15 L8.5 15 L4.2 9.5Z" fill="#43c54f"/></svg>
<div class="a" style="left:425px;top:168px;width:1px;height:34px;background:#cfd3d8"></div>
<svg class="a" style="left:439px;top:178px;" width="23" height="14" viewBox="0 0 23 14"><path d="M1 1.5 L4.5 4.5 Q13 -3.5 22.5 11 Q14 4.5 9 9.5 L10.5 13 H1 Z" fill="#2a87d6"/></svg>
<svg class="a" style="left:474px;top:184px;" width="7" height="4" viewBox="0 0 7 4"><path d="M0 0 H7 L3.5 4 Z" fill="#111"/></svg>
<svg class="a" style="left:495px;top:178px;" width="23" height="14" viewBox="0 0 23 14"><path d="M22 1.5 L18.5 4.5 Q10 -3.5 0.5 11 Q9 4.5 14 9.5 L12.5 13 H22 Z" fill="#b8b8b8"/></svg>
<svg class="a" style="left:530px;top:184px;" width="7" height="4" viewBox="0 0 7 4"><path d="M0 0 H7 L3.5 4 Z" fill="#b0b0b0"/></svg>
<div class="a" style="left:541px;top:168px;width:1px;height:34px;background:#cfd3d8"></div>
<svg class="a" style="left:552px;top:173px;" width="26" height="24" viewBox="0 0 26 24"><path d="M2 20 V9 L4 3 Q5 0.5 7 1 Q9 0.5 10 3 L11.5 9 V20Z" fill="#2d8ad8"/><path d="M13 14 V9 L14.5 3 Q15.5 0.5 17.5 1 Q19.5 0.5 20.5 3 L22.5 9 V14Z" fill="#2d8ad8"/><rect x="10" y="8" width="4" height="6" fill="#2d8ad8"/><rect x="2" y="19" width="9.5" height="2.5" fill="#f29a22"/><path d="M14 18.5 H22" stroke="#f29a22" stroke-width="2.6"/><path d="M20 14.5 L25 18.5 L20 22.5Z" fill="#f29a22"/></svg>
<svg class="a" style="left:592px;top:174px;" width="23" height="24" viewBox="0 0 23 24"><rect x="0.5" y="0.5" width="21" height="18" fill="#fff" stroke="#e2e2e2"/><circle cx="5" cy="9" r="2.6" fill="#f29a22"/><circle cx="10.5" cy="9" r="2.6" fill="#f29a22"/><circle cx="17" cy="8.5" r="2.4" fill="none" stroke="#2d8ad8" stroke-width="1.6"/><circle cx="13" cy="18" r="3.6" fill="none" stroke="#6a6a6a" stroke-width="2.4" stroke-dasharray="1.6 1.2"/><circle cx="13" cy="18" r="2.6" fill="none" stroke="#6a6a6a" stroke-width="1.4"/></svg>
<svg class="a" style="left:630px;top:174px;" width="24" height="23" viewBox="0 0 24 23"><rect x="0" y="0" width="23" height="5" fill="#f29a22"/><path d="M16 2.5 H21" stroke="#fff" stroke-width="1.2" stroke-dasharray="1 1"/><path d="M14 9 H22 M14 12 H22 M14 15 H22" stroke="#e4e4e4" stroke-width="1.2"/><circle cx="9" cy="12" r="5" fill="#d8ebf8" stroke="#2d8ad8" stroke-width="2.2"/><path d="M5.5 15.5 L1 21" stroke="#2d8ad8" stroke-width="2.6" stroke-linecap="round"/></svg>
<svg class="a" style="left:668px;top:173px;" width="24" height="25" viewBox="0 0 24 25"><rect x="0.5" y="7" width="5" height="17" rx="0.5" fill="#2d8ad8"/><rect x="7.5" y="11" width="5" height="13" rx="0.5" fill="#f29a22"/><rect x="14.5" y="14" width="4.5" height="10" rx="0.5" fill="#8a8a8a"/><path d="M2.5 2.5 L10 5 L17.5 8" stroke="#3cc24a" stroke-width="1.6" fill="none"/><circle cx="2.5" cy="2.5" r="2" fill="#3cc24a"/><circle cx="10" cy="5" r="2" fill="#3cc24a"/><circle cx="17.5" cy="8" r="2" fill="#3cc24a"/></svg>
<svg class="a" style="left:704px;top:172px;" width="25" height="24" viewBox="0 0 25 24"><circle cx="15" cy="12.5" r="7.5" fill="none" stroke="#c4c4c4" stroke-width="3.5" stroke-dasharray="2.4 1.6"/><circle cx="15" cy="12.5" r="5" fill="#eaeaea" stroke="#c4c4c4" stroke-width="1.6"/><path d="M1 10 H7 M1 14 H7 M1 18 H7" stroke="#cfcfcf" stroke-width="1.8"/><circle cx="4" cy="3" r="2.5" fill="#c8c8c8"/></svg>
<div class="t" style="left:742px;top:174px;font-size:21px;color:#c0c0c0;font-weight:bold;font-family:'Liberation Serif',serif;"><b>A</b></div>
<svg class="a" style="left:753px;top:181px;" width="14" height="14" viewBox="0 0 14 14"><path d="M3 12 L12 3" stroke="#c4c4c4" stroke-width="2.6" stroke-linecap="round"/></svg>
<div class="a" style="left:775px;top:168px;width:1px;height:34px;background:#cfd3d8"></div>
<svg class="a" style="left:786px;top:173px;" width="24" height="23" viewBox="0 0 24 23"><rect x="0" y="0" width="23" height="22" fill="#f5f3ef"/><text x="2" y="11" font-family="Liberation Sans" font-weight="bold" font-size="12" fill="#f29a22">a</text><text x="12" y="21" font-family="Liberation Sans" font-weight="bold" font-size="13" fill="#2c86d3">z</text></svg>
<svg class="a" style="left:824px;top:173px;" width="24" height="23" viewBox="0 0 24 23"><rect x="0" y="0" width="23" height="22" fill="#f5f3ef"/><text x="1" y="12" font-family="Liberation Sans" font-weight="bold" font-size="12" fill="#f29a22">0</text><text x="11" y="21" font-family="Liberation Sans" font-weight="bold" font-size="13" fill="#2c86d3">9</text></svg>
<svg class="a" style="left:861px;top:173px;" width="24" height="23" viewBox="0 0 24 23"><rect x="0" y="0" width="23" height="22" fill="#f5f3ef"/><text x="11.5" y="10" font-family="Liberation Sans" font-weight="bold" font-size="10" text-anchor="middle" fill="#f29a22">a-z</text><text x="11.5" y="20" font-family="Liberation Sans" font-weight="bold" font-size="10" text-anchor="middle" fill="#2c86d3">0-9</text></svg>
<svg class="a" style="left:899px;top:173px;" width="24" height="23" viewBox="0 0 24 23"><rect x="0" y="0" width="23" height="22" fill="#f5f3ef"/><rect x="4" y="16" width="15" height="2.5" fill="#2c86d3"/></svg>
<svg class="a" style="left:936px;top:173px;" width="24" height="23" viewBox="0 0 24 23"><rect x="0" y="0" width="23" height="22" fill="#f5f3ef"/><text x="11.5" y="17" font-family="Liberation Sans" font-weight="bold" font-size="16" text-anchor="middle" fill="#2c86d3">[ ]</text></svg>
<div class="a" style="left:970px;top:168px;width:1px;height:34px;background:#cfd3d8"></div>
<div class="a" style="left:975px;top:167px;width:37px;height:37px;border:1px solid #c9cdd2"></div>
<svg class="a" style="left:981px;top:173px;" width="24" height="24" viewBox="0 0 24 24"><rect x="0" y="0" width="17" height="5" fill="#3b82c8"/><rect x="0" y="6" width="17" height="5" fill="#b8c4d0"/><rect x="0" y="12" width="17" height="5" fill="#b8c4d0"/><rect x="0" y="18" width="17" height="4" fill="#b8c4d0"/><rect x="12" y="12" width="9" height="9" fill="#d10e0e"/></svg>
<svg class="a" style="left:1020px;top:174px;" width="22" height="22" viewBox="0 0 22 22"><circle cx="11" cy="11" r="9.5" fill="none" stroke="#c4c4c4" stroke-width="1.8"/><path d="M11 16 V6 M7 10 L11 6 L15 10" stroke="#c4c4c4" stroke-width="1.8" fill="none"/></svg>
<svg class="a" style="left:1058px;top:174px;" width="22" height="22" viewBox="0 0 22 22"><circle cx="11" cy="11" r="9.5" fill="none" stroke="#2c6fbf" stroke-width="1.8"/><path d="M11 6 V16 M7 12 L11 16 L15 12" stroke="#2c6fbf" stroke-width="1.8" fill="none"/></svg>
<svg class="a" style="left:1094px;top:174px;" width="26" height="22" viewBox="0 0 26 22"><rect x="3" y="0" width="18" height="5" fill="#3b82c8"/><rect x="3" y="7" width="18" height="6" fill="#b8c4d0"/><rect x="3" y="15" width="18" height="6" fill="#b8c4d0"/><path d="M1 10 H23" stroke="#f29a22" stroke-width="2"/><path d="M0 10 L4 7 V13Z M24 10 L20 7 V13Z" fill="#f29a22"/></svg>
<svg class="a" style="left:1132px;top:182px;" width="22" height="8" viewBox="0 0 22 8"><circle cx="3" cy="4" r="2.8" fill="#8a8a8a"/><circle cx="11" cy="4" r="2.8" fill="#8a8a8a"/><circle cx="19" cy="4" r="2.8" fill="#8a8a8a"/></svg>
<div class="a" style="left:360px;top:213px;width:1100px;height:1px;background:#a9a9a9"></div>
<div class="a" style="left:360px;top:214px;width:1100px;height:27px;background:#f0f0f0"></div>
<div class="a" style="left:435px;top:214px;width:1025px;height:27px;background:#f2d7a6"></div>
<div class="a" style="left:436.5px;top:217px;width:1024px;height:20px;border:2px solid #e3d3b3;border-right:none;background:#f3e0bb"></div>
<div class="a" style="left:360px;top:240.5px;width:1100px;height:2.5px;background:#a6a6a6"></div>
<svg class="a" style="left:442.3px;top:226.5px;" width="1020" height="3" viewBox="0 0 1020 3"><rect x="0" y="0" width="2.5" height="2.5" fill="#168aaf"/><rect x="10" y="0" width="2.5" height="2.5" fill="#168aaf"/><rect x="20" y="0" width="2.5" height="2.5" fill="#168aaf"/><rect x="30" y="0" width="2.5" height="2.5" fill="#168aaf"/><rect x="40" y="0" width="2.5" height="2.5" fill="#168aaf"/><rect x="50" y="0" width="2.5" height="2.5" fill="#168aaf"/><rect x="60" y="0" width="2.5" height="2.5" fill="#168aaf"/><rect x="70" y="0" width="2.5" height="2.5" fill="#168aaf"/><rect x="80" y="0" width="2.5" height="2.5" fill="#168aaf"/><rect x="90" y="0" width="2.5" height="2.5" fill="#168aaf"/><rect x="100" y="0" width="2.5" height="2.5" fill="#168aaf"/><rect x="110" y="0" width="2.5" height="2.5" fill="#168aaf"/><rect x="120" y="0" width="2.5" height="2.5" fill="#168aaf"/><rect x="130" y="0" width="2.5" height="2.5" fill="#168aaf"/><rect x="140" y="0" width="2.5" height="2.5" fill="#168aaf"/><rect x="150" y="0" width="2.5" height="2.5" fill="#168aaf"/><rect x="160" y="0" width="2.5" height="2.5" fill="#168aaf"/><rect x="170" y="0" width="2.5" height="2.5" fill="#168aaf"/><rect x="180" y="0" width="2.5" height="2.5" fill="#168aaf"/><rect x="190" y="0" width="2.5" height="2.5" fill="#168aaf"/><rect x="200" y="0" width="2.5" height="2.5" fill="#168aaf"/><rect x="210" y="0" width="2.5" height="2.5" fill="#168aaf"/><rect x="220" y="0" width="2.5" height="2.5" fill="#168aaf"/><rect x="230" y="0" width="2.5" height="2.5" fill="#168aaf"/><rect x="240" y="0" width="2.5" height="2.5" fill="#168aaf"/><rect x="250" y="0" width="2.5" height="2.5" fill="#168aaf"/><rect x="260" y="0" width="2.5" height="2.5" fill="#168aaf"/><rect x="270" y="0" width="2.5" height="2.5" fill="#168aaf"/><rect x="280" y="0" width="2.5" height="2.5" fill="#168aaf"/><rect x="290" y="0" width="2.5" height="2.5" fill="#168aaf"/><rect x="300" y="0" width="2.5" height="2.5" fill="#168aaf"/><rect x="310" y="0" width="2.5" height="2.5" fill="#168aaf"/><rect x="320" y="0" width="2.5" height="2.5" fill="#168aaf"/><rect x="330" y="0" width="2.5" height="2.5" fill="#168aaf"/><rect x="340" y="0" width="2.5" height="2.5" fill="#168aaf"/><rect x="350" y="0" width="2.5" height="2.5" fill="#168aaf"/><rect x="360" y="0" width="2.5" height="2.5" fill="#168aaf"/><rect x="370" y="0" width="2.5" height="2.5" fill="#168aaf"/><rect x="380" y="0" width="2.5" height="2.5" fill="#168aaf"/><rect x="390" y="0" width="2.5" height="2.5" fill="#168aaf"/><rect x="400" y="0" width="2.5" height="2.5" fill="#168aaf"/><rect x="410" y="0" width="2.5" height="2.5" fill="#168aaf"/><rect x="420" y="0" width="2.5" height="2.5" fill="#168aaf"/><rect x="430" y="0" width="2.5" height="2.5" fill="#168aaf"/><rect x="440" y="0" width="2.5" height="2.5" fill="#168aaf"/><rect x="450" y="0" width="2.5" height="2.5" fill="#168aaf"/><rect x="460" y="0" width="2.5" height="2.5" fill="#168aaf"/><rect x="470" y="0" width="2.5" height="2.5" fill="#168aaf"/><rect x="480" y="0" width="2.5" height="2.5" fill="#168aaf"/><rect x="490" y="0" width="2.5" height="2.5" fill="#168aaf"/><rect x="500" y="0" width="2.5" height="2.5" fill="#168aaf"/><rect x="510" y="0" width="2.5" height="2.5" fill="#168aaf"/><rect x="520" y="0" width="2.5" height="2.5" fill="#168aaf"/><rect x="530" y="0" width="2.5" height="2.5" fill="#168aaf"/><rect x="540" y="0" width="2.5" height="2.5" fill="#168aaf"/><rect x="550" y="0" width="2.5" height="2.5" fill="#168aaf"/><rect x="560" y="0" width="2.5" height="2.5" fill="#168aaf"/><rect x="570" y="0" width="2.5" height="2.5" fill="#168aaf"/><rect x="580" y="0" width="2.5" height="2.5" fill="#168aaf"/><rect x="590" y="0" width="2.5" height="2.5" fill="#168aaf"/><rect x="600" y="0" width="2.5" height="2.5" fill="#168aaf"/><rect x="610" y="0" width="2.5" height="2.5" fill="#168aaf"/><rect x="620" y="0" width="2.5" height="2.5" fill="#168aaf"/><rect x="630" y="0" width="2.5" height="2.5" fill="#168aaf"/><rect x="640" y="0" width="2.5" height="2.5" fill="#168aaf"/><rect x="650" y="0" width="2.5" height="2.5" fill="#168aaf"/><rect x="660" y="0" width="2.5" height="2.5" fill="#168aaf"/><rect x="670" y="0" width="2.5" height="2.5" fill="#168aaf"/><rect x="680" y="0" width="2.5" height="2.5" fill="#168aaf"/><rect x="690" y="0" width="2.5" height="2.5" fill="#168aaf"/><rect x="700" y="0" width="2.5" height="2.5" fill="#168aaf"/><rect x="710" y="0" width="2.5" height="2.5" fill="#168aaf"/><rect x="720" y="0" width="2.5" height="2.5" fill="#168aaf"/><rect x="730" y="0" width="2.5" height="2.5" fill="#168aaf"/><rect x="740" y="0" width="2.5" height="2.5" fill="#168aaf"/><rect x="750" y="0" width="2.5" height="2.5" fill="#168aaf"/><rect x="760" y="0" width="2.5" height="2.5" fill="#168aaf"/><rect x="770" y="0" width="2.5" height="2.5" fill="#168aaf"/><rect x="780" y="0" width="2.5" height="2.5" fill="#168aaf"/><rect x="790" y="0" width="2.5" height="2.5" fill="#168aaf"/><rect x="800" y="0" width="2.5" height="2.5" fill="#168aaf"/><rect x="810" y="0" width="2.5" height="2.5" fill="#168aaf"/><rect x="820" y="0" width="2.5" height="2.5" fill="#168aaf"/><rect x="830" y="0" width="2.5" height="2.5" fill="#168aaf"/><rect x="840" y="0" width="2.5" height="2.5" fill="#168aaf"/><rect x="850" y="0" width="2.5" height="2.5" fill="#168aaf"/><rect x="860" y="0" width="2.5" height="2.5" fill="#168aaf"/><rect x="870" y="0" width="2.5" height="2.5" fill="#168aaf"/><rect x="880" y="0" width="2.5" height="2.5" fill="#168aaf"/><rect x="890" y="0" width="2.5" height="2.5" fill="#168aaf"/><rect x="900" y="0" width="2.5" height="2.5" fill="#168aaf"/><rect x="910" y="0" width="2.5" height="2.5" fill="#168aaf"/><rect x="920" y="0" width="2.5" height="2.5" fill="#168aaf"/><rect x="930" y="0" width="2.5" height="2.5" fill="#168aaf"/><rect x="940" y="0" width="2.5" height="2.5" fill="#168aaf"/><rect x="980" y="0" width="2.5" height="2.5" fill="#168aaf"/><rect x="990" y="0" width="2.5" height="2.5" fill="#168aaf"/><rect x="1000" y="0" width="2.5" height="2.5" fill="#168aaf"/><rect x="1010" y="0" width="2.5" height="2.5" fill="#168aaf"/></svg>
<div class="t" style="left:1388px;top:219.5px;font-size:16.67px;color:#222;font-weight:normal;font-family:'Liberation Mono',monospace;">ÑÑØ</div>
<div class="a" style="left:360px;top:243px;width:22px;height:718px;background:#f0f0f0"></div>
<div class="a" style="left:382px;top:243px;width:46px;height:718px;background:#eef0f4"></div>
<div class="a" style="left:428px;top:243px;width:1012px;height:718px;background:#fff"></div>
<div class="a" style="left:0;top:0;width:1920px;height:1080px;clip:rect(243px,1440px,961px,428px)">
<div class="a" style="left:437px;top:241.4px;width:1003px;height:33.77px;background:#fcfcfc"></div>
<div class="t" style="left:718px;top:253.12px;font-size:16.67px;color:#222;font-weight:normal;font-family:'Liberation Mono',monospace">Description</div>
<div class="t" style="left:1058px;top:253.12px;font-size:16.67px;color:#222;font-weight:normal;font-family:'Liberation Mono',monospace">Quantity</div>
<div class="t" style="left:1248px;top:253.12px;font-size:16.67px;color:#222;font-weight:normal;font-family:'Liberation Mono',monospace">Unit Price</div>
<div class="t" style="left:1418px;top:253.12px;font-size:16.67px;color:#222;font-weight:normal;font-family:'Liberation Mono',monospace">Line Total</div>
<div class="a" style="left:437px;top:275.17px;width:1003px;height:33.77px;background:#f7f7f7"></div>
<div class="a" style="left:437px;top:278.67px;width:1001px;height:28px;background:#e3e9f4"></div>
<div class="a" style="left:438px;top:278.67px;width:320px;height:28px;border-radius:6px;background:#35567b"></div>
<div class="a" style="left:1188px;top:278.67px;width:9px;height:28px;border-radius:4px;background:#d3dbea"></div>
<div class="a" style="left:1308px;top:278.67px;width:69px;height:28px;border-radius:6px;background:#d3dbea"></div>
<div class="a" style="left:1379px;top:278.67px;width:60px;height:28px;border-radius:6px;background:#d3dbea"></div>
<div class="t" style="left:438px;top:286.89px;font-size:16.67px;color:#f2f2f2;font-weight:normal;font-family:'Liberation Mono',monospace">Consulting Service description 1</div>
<div class="t" style="left:1188px;top:286.89px;font-size:16.67px;color:#2d3c6c;font-weight:normal;font-family:'Liberation Mono',monospace">1</div>
<div class="t" style="left:1308px;top:286.89px;font-size:16.67px;color:#2d3c6c;font-weight:normal;font-family:'Liberation Mono',monospace">150.00</div>
<div class="t" style="left:1388px;top:286.89px;font-size:16.67px;color:#2d3c6c;font-weight:normal;font-family:'Liberation Mono',monospace">150.0</div>
<div class="a" style="left:437px;top:308.94px;width:1003px;height:33.77px;background:#fcfcfc"></div>
<div class="a" style="left:437px;top:312.44px;width:1001px;height:28px;background:#e3e9f4"></div>
<div class="a" style="left:438px;top:312.44px;width:320px;height:28px;border-radius:6px;background:#35567b"></div>
<div class="a" style="left:1188px;top:312.44px;width:9px;height:28px;border-radius:4px;background:#d3dbea"></div>
<div class="a" style="left:1308px;top:312.44px;width:69px;height:28px;border-radius:6px;background:#d3dbea"></div>
<div class="a" style="left:1379px;top:312.44px;width:60px;height:28px;border-radius:6px;background:#d3dbea"></div>
<div class="t" style="left:438px;top:320.66px;font-size:16.67px;color:#f2f2f2;font-weight:normal;font-family:'Liberation Mono',monospace">Consulting Service description 2</div>
<div class="t" style="left:1188px;top:320.66px;font-size:16.67px;color:#2d3c6c;font-weight:normal;font-family:'Liberation Mono',monospace">2</div>
<div class="t" style="left:1308px;top:320.66px;font-size:16.67px;color:#2d3c6c;font-weight:normal;font-family:'Liberation Mono',monospace">150.00</div>
<div class="t" style="left:1388px;top:320.66px;font-size:16.67px;color:#2d3c6c;font-weight:normal;font-family:'Liberation Mono',monospace">300.0</div>
<div class="a" style="left:437px;top:342.71px;width:1003px;height:33.77px;background:#f7f7f7"></div>
<div class="a" style="left:437px;top:346.21px;width:1001px;height:28px;background:#e3e9f4"></div>
<div class="a" style="left:438px;top:346.21px;width:320px;height:28px;border-radius:6px;background:#35567b"></div>
<div class="a" style="left:1188px;top:346.21px;width:9px;height:28px;border-radius:4px;background:#d3dbea"></div>
<div class="a" style="left:1308px;top:346.21px;width:69px;height:28px;border-radius:6px;background:#d3dbea"></div>
<div class="a" style="left:1379px;top:346.21px;width:60px;height:28px;border-radius:6px;background:#d3dbea"></div>
<div class="t" style="left:438px;top:354.43px;font-size:16.67px;color:#f2f2f2;font-weight:normal;font-family:'Liberation Mono',monospace">Consulting Service description 3</div>
<div class="t" style="left:1188px;top:354.43px;font-size:16.67px;color:#2d3c6c;font-weight:normal;font-family:'Liberation Mono',monospace">3</div>
<div class="t" style="left:1308px;top:354.43px;font-size:16.67px;color:#2d3c6c;font-weight:normal;font-family:'Liberation Mono',monospace">150.00</div>
<div class="t" style="left:1388px;top:354.43px;font-size:16.67px;color:#2d3c6c;font-weight:normal;font-family:'Liberation Mono',monospace">450.0</div>
<div class="a" style="left:437px;top:376.48px;width:1003px;height:33.77px;background:#fcfcfc"></div>
<div class="a" style="left:437px;top:379.98px;width:1001px;height:28px;background:#e3e9f4"></div>
<div class="a" style="left:438px;top:379.98px;width:320px;height:28px;border-radius:6px;background:#35567b"></div>
<div class="a" style="left:1188px;top:379.98px;width:9px;height:28px;border-radius:4px;background:#d3dbea"></div>
<div class="a" style="left:1308px;top:379.98px;width:69px;height:28px;border-radius:6px;background:#d3dbea"></div>
<div class="a" style="left:1379px;top:379.98px;width:60px;height:28px;border-radius:6px;background:#d3dbea"></div>
<div class="t" style="left:438px;top:388.20px;font-size:16.67px;color:#f2f2f2;font-weight:normal;font-family:'Liberation Mono',monospace">Consulting Service description 4</div>
<div class="t" style="left:1188px;top:388.20px;font-size:16.67px;color:#2d3c6c;font-weight:normal;font-family:'Liberation Mono',monospace">4</div>
<div class="t" style="left:1308px;top:388.20px;font-size:16.67px;color:#2d3c6c;font-weight:normal;font-family:'Liberation Mono',monospace">750.00</div>
<div class="t" style="left:1388px;top:388.20px;font-size:16.67px;color:#2d3c6c;font-weight:normal;font-family:'Liberation Mono',monospace">3000.</div>
<svg class="a" style="left:1378px;top:401.98px;" width="61" height="4" viewBox="0 0 61 4"><path d="M0 3 L2.00 0.6 L4.00 3 L6.00 0.6 L8.00 3 L10.00 0.6 L12.00 3 L14.00 0.6 L16.00 3 L18.00 0.6 L20.00 3 L22.00 0.6 L24.00 3 L26.00 0.6 L28.00 3 L30.00 0.6 L32.00 3 L34.00 0.6 L36.00 3 L38.00 0.6 L40.00 3 L42.00 0.6 L44.00 3 L46.00 0.6 L48.00 3 L50.00 0.6 L52.00 3 L54.00 0.6 L56.00 3 L58.00 0.6 L60.00 3 L62.00 0.6 L64.00 3" stroke="#ef5a2a" stroke-width="1" fill="none"/></svg>
<div class="a" style="left:437px;top:410.25px;width:1003px;height:33.77px;background:#f7f7f7"></div>
<div class="a" style="left:437px;top:413.75px;width:1001px;height:28px;background:#e3e9f4"></div>
<div class="a" style="left:438px;top:413.75px;width:320px;height:28px;border-radius:6px;background:#35567b"></div>
<div class="a" style="left:1188px;top:413.75px;width:9px;height:28px;border-radius:4px;background:#d3dbea"></div>
<div class="a" style="left:1308px;top:413.75px;width:69px;height:28px;border-radius:6px;background:#d3dbea"></div>
<div class="a" style="left:1379px;top:413.75px;width:60px;height:28px;border-radius:6px;background:#d3dbea"></div>
<div class="t" style="left:438px;top:421.97px;font-size:16.67px;color:#f2f2f2;font-weight:normal;font-family:'Liberation Mono',monospace">Consulting Service description 5</div>
<div class="t" style="left:1188px;top:421.97px;font-size:16.67px;color:#2d3c6c;font-weight:normal;font-family:'Liberation Mono',monospace">5</div>
<div class="t" style="left:1308px;top:421.97px;font-size:16.67px;color:#2d3c6c;font-weight:normal;font-family:'Liberation Mono',monospace">250.00</div>
<div class="t" style="left:1388px;top:421.97px;font-size:16.67px;color:#2d3c6c;font-weight:normal;font-family:'Liberation Mono',monospace">1250.</div>
<svg class="a" style="left:1378px;top:435.75px;" width="61" height="4" viewBox="0 0 61 4"><path d="M0 3 L2.00 0.6 L4.00 3 L6.00 0.6 L8.00 3 L10.00 0.6 L12.00 3 L14.00 0.6 L16.00 3 L18.00 0.6 L20.00 3 L22.00 0.6 L24.00 3 L26.00 0.6 L28.00 3 L30.00 0.6 L32.00 3 L34.00 0.6 L36.00 3 L38.00 0.6 L40.00 3 L42.00 0.6 L44.00 3 L46.00 0.6 L48.00 3 L50.00 0.6 L52.00 3 L54.00 0.6 L56.00 3 L58.00 0.6 L60.00 3 L62.00 0.6 L64.00 3" stroke="#ef5a2a" stroke-width="1" fill="none"/></svg>
<div class="a" style="left:437px;top:444.02px;width:1003px;height:33.77px;background:#fcfcfc"></div>
<div class="a" style="left:437px;top:447.52px;width:1001px;height:28px;background:#e3e9f4"></div>
<div class="a" style="left:438px;top:447.52px;width:320px;height:28px;border-radius:6px;background:#35567b"></div>
<div class="a" style="left:1188px;top:447.52px;width:9px;height:28px;border-radius:4px;background:#d3dbea"></div>
<div class="a" style="left:1308px;top:447.52px;width:69px;height:28px;border-radius:6px;background:#d3dbea"></div>
<div class="a" style="left:1379px;top:447.52px;width:60px;height:28px;border-radius:6px;background:#d3dbea"></div>
<div class="t" style="left:438px;top:455.74px;font-size:16.67px;color:#f2f2f2;font-weight:normal;font-family:'Liberation Mono',monospace">Consulting Service description 6</div>
<div class="t" style="left:1188px;top:455.74px;font-size:16.67px;color:#2d3c6c;font-weight:normal;font-family:'Liberation Mono',monospace">6</div>
<div class="t" style="left:1308px;top:455.74px;font-size:16.67px;color:#2d3c6c;font-weight:normal;font-family:'Liberation Mono',monospace">150.00</div>
<div class="t" style="left:1388px;top:455.74px;font-size:16.67px;color:#2d3c6c;font-weight:normal;font-family:'Liberation Mono',monospace">900.0</div>
<div class="a" style="left:437px;top:477.79px;width:1003px;height:33.77px;background:#f7f7f7"></div>
<div class="a" style="left:437px;top:481.29px;width:1001px;height:28px;background:#e3e9f4"></div>
<div class="a" style="left:438px;top:481.29px;width:320px;height:28px;border-radius:6px;background:#35567b"></div>
<div class="a" style="left:1188px;top:481.29px;width:9px;height:28px;border-radius:4px;background:#d3dbea"></div>
<div class="a" style="left:1308px;top:481.29px;width:69px;height:28px;border-radius:6px;background:#d3dbea"></div>
<div class="a" style="left:1379px;top:481.29px;width:60px;height:28px;border-radius:6px;background:#d3dbea"></div>
<div class="t" style="left:438px;top:489.51px;font-size:16.67px;color:#f2f2f2;font-weight:normal;font-family:'Liberation Mono',monospace">Consulting Service description 7</div>
<div class="t" style="left:1188px;top:489.51px;font-size:16.67px;color:#2d3c6c;font-weight:normal;font-family:'Liberation Mono',monospace">7</div>
<div class="t" style="left:1308px;top:489.51px;font-size:16.67px;color:#2d3c6c;font-weight:normal;font-family:'Liberation Mono',monospace">50.00</div>
<div class="t" style="left:1388px;top:489.51px;font-size:16.67px;color:#2d3c6c;font-weight:normal;font-family:'Liberation Mono',monospace">350.0</div>
<div class="a" style="left:437px;top:511.56px;width:1003px;height:33.77px;background:#fcfcfc"></div>
<div class="a" style="left:437px;top:515.06px;width:1001px;height:28px;background:#e3e9f4"></div>
<div class="a" style="left:438px;top:515.06px;width:320px;height:28px;border-radius:6px;background:#35567b"></div>
<div class="a" style="left:1188px;top:515.06px;width:9px;height:28px;border-radius:4px;background:#d3dbea"></div>
<div class="a" style="left:1308px;top:515.06px;width:69px;height:28px;border-radius:6px;background:#d3dbea"></div>
<div class="a" style="left:1379px;top:515.06px;width:60px;height:28px;border-radius:6px;background:#d3dbea"></div>
<div class="t" style="left:438px;top:523.28px;font-size:16.67px;color:#f2f2f2;font-weight:normal;font-family:'Liberation Mono',monospace">Consulting Service description 8</div>
<div class="t" style="left:1188px;top:523.28px;font-size:16.67px;color:#2d3c6c;font-weight:normal;font-family:'Liberation Mono',monospace">8</div>
<div class="t" style="left:1308px;top:523.28px;font-size:16.67px;color:#2d3c6c;font-weight:normal;font-family:'Liberation Mono',monospace">50.00</div>
<div class="t" style="left:1388px;top:523.28px;font-size:16.67px;color:#2d3c6c;font-weight:normal;font-family:'Liberation Mono',monospace">400.0</div>
<div class="a" style="left:437px;top:545.33px;width:1003px;height:33.77px;background:#f7f7f7"></div>
<div class="a" style="left:437px;top:548.83px;width:1001px;height:28px;background:#e3e9f4"></div>
<div class="a" style="left:438px;top:548.83px;width:320px;height:28px;border-radius:6px;background:#35567b"></div>
<div class="a" style="left:1188px;top:548.83px;width:9px;height:28px;border-radius:4px;background:#d3dbea"></div>
<div class="a" style="left:1308px;top:548.83px;width:69px;height:28px;border-radius:6px;background:#d3dbea"></div>
<div class="a" style="left:1379px;top:548.83px;width:60px;height:28px;border-radius:6px;background:#d3dbea"></div>
<div class="t" style="left:438px;top:557.05px;font-size:16.67px;color:#f2f2f2;font-weight:normal;font-family:'Liberation Mono',monospace">Consulting Service description 9</div>
<div class="t" style="left:1188px;top:557.05px;font-size:16.67px;color:#2d3c6c;font-weight:normal;font-family:'Liberation Mono',monospace">9</div>
<div class="t" style="left:1308px;top:557.05px;font-size:16.67px;color:#2d3c6c;font-weight:normal;font-family:'Liberation Mono',monospace">50.00</div>
<div class="t" style="left:1388px;top:557.05px;font-size:16.67px;color:#2d3c6c;font-weight:normal;font-family:'Liberation Mono',monospace">450.0</div>
<div class="a" style="left:437px;top:579.1px;width:1003px;height:33.77px;background:#fcfcfc"></div>
<div class="a" style="left:437px;top:582.6px;width:1001px;height:28px;background:#e3e9f4"></div>
<div class="a" style="left:438px;top:582.6px;width:320px;height:28px;border-radius:6px;background:#4a8bd0"></div>
<div class="a" style="left:1188px;top:582.6px;width:9px;height:28px;border-radius:4px;background:#d3dbea"></div>
<div class="a" style="left:1308px;top:582.6px;width:69px;height:28px;border-radius:6px;background:#d3dbea"></div>
<div class="a" style="left:1379px;top:582.6px;width:60px;height:28px;border-radius:6px;background:#d3dbea"></div>
<div class="t" style="left:438px;top:590.82px;font-size:16.67px;color:#eda53a;font-weight:normal;font-family:'Liberation Mono',monospace">Consulting Service description 1</div>
<div class="t" style="left:758px;top:590.82px;font-size:16.67px;color:#1a1a1a;font-weight:normal;font-family:'Liberation Mono',monospace">0</div>
<div class="t" style="left:1168px;top:590.82px;font-size:16.67px;color:#1a1a1a;font-weight:normal;font-family:'Liberation Mono',monospace">10</div>
<svg class="a" style="left:438px;top:604.6px;" width="320" height="4" viewBox="0 0 320 4"><path d="M0 3 L2.00 0.6 L4.00 3 L6.00 0.6 L8.00 3 L10.00 0.6 L12.00 3 L14.00 0.6 L16.00 3 L18.00 0.6 L20.00 3 L22.00 0.6 L24.00 3 L26.00 0.6 L28.00 3 L30.00 0.6 L32.00 3 L34.00 0.6 L36.00 3 L38.00 0.6 L40.00 3 L42.00 0.6 L44.00 3 L46.00 0.6 L48.00 3 L50.00 0.6 L52.00 3 L54.00 0.6 L56.00 3 L58.00 0.6 L60.00 3 L62.00 0.6 L64.00 3 L66.00 0.6 L68.00 3 L70.00 0.6 L72.00 3 L74.00 0.6 L76.00 3 L78.00 0.6 L80.00 3 L82.00 0.6 L84.00 3 L86.00 0.6 L88.00 3 L90.00 0.6 L92.00 3 L94.00 0.6 L96.00 3 L98.00 0.6 L100.00 3 L102.00 0.6 L104.00 3 L106.00 0.6 L108.00 3 L110.00 0.6 L112.00 3 L114.00 0.6 L116.00 3 L118.00 0.6 L120.00 3 L122.00 0.6 L124.00 3 L126.00 0.6 L128.00 3 L130.00 0.6 L132.00 3 L134.00 0.6 L136.00 3 L138.00 0.6 L140.00 3 L142.00 0.6 L144.00 3 L146.00 0.6 L148.00 3 L150.00 0.6 L152.00 3 L154.00 0.6 L156.00 3 L158.00 0.6 L160.00 3 L162.00 0.6 L164.00 3 L166.00 0.6 L168.00 3 L170.00 0.6 L172.00 3 L174.00 0.6 L176.00 3 L178.00 0.6 L180.00 3 L182.00 0.6 L184.00 3 L186.00 0.6 L188.00 3 L190.00 0.6 L192.00 3 L194.00 0.6 L196.00 3 L198.00 0.6 L200.00 3 L202.00 0.6 L204.00 3 L206.00 0.6 L208.00 3 L210.00 0.6 L212.00 3 L214.00 0.6 L216.00 3 L218.00 0.6 L220.00 3 L222.00 0.6 L224.00 3 L226.00 0.6 L228.00 3 L230.00 0.6 L232.00 3 L234.00 0.6 L236.00 3 L238.00 0.6 L240.00 3 L242.00 0.6 L244.00 3 L246.00 0.6 L248.00 3 L250.00 0.6 L252.00 3 L254.00 0.6 L256.00 3 L258.00 0.6 L260.00 3 L262.00 0.6 L264.00 3 L266.00 0.6 L268.00 3 L270.00 0.6 L272.00 3 L274.00 0.6 L276.00 3 L278.00 0.6 L280.00 3 L282.00 0.6 L284.00 3 L286.00 0.6 L288.00 3 L290.00 0.6 L292.00 3 L294.00 0.6 L296.00 3 L298.00 0.6 L300.00 3 L302.00 0.6 L304.00 3 L306.00 0.6 L308.00 3 L310.00 0.6 L312.00 3 L314.00 0.6 L316.00 3 L318.00 0.6 L320.00 3" stroke="#ef5a2a" stroke-width="1" fill="none"/></svg>
<svg class="a" style="left:1188px;top:604.6px;" width="10" height="4" viewBox="0 0 10 4"><path d="M0 3 L2.00 0.6 L4.00 3 L6.00 0.6 L8.00 3 L10.00 0.6 L12.00 3" stroke="#ef5a2a" stroke-width="1" fill="none"/></svg>
<div class="t" style="left:1308px;top:590.82px;font-size:16.67px;color:#2d3c6c;font-weight:normal;font-family:'Liberation Mono',monospace">50.00</div>
<div class="t" style="left:1388px;top:590.82px;font-size:16.67px;color:#2d3c6c;font-weight:normal;font-family:'Liberation Mono',monospace">500.0</div>
<div class="a" style="left:437px;top:612.87px;width:1003px;height:33.77px;background:#f7f7f7"></div>
<div class="a" style="left:437px;top:616.37px;width:1001px;height:28px;background:#e3e9f4"></div>
<div class="a" style="left:438px;top:616.37px;width:320px;height:28px;border-radius:6px;background:#35567b"></div>
<div class="a" style="left:1188px;top:616.37px;width:9px;height:28px;border-radius:4px;background:#d3dbea"></div>
<div class="a" style="left:1308px;top:616.37px;width:69px;height:28px;border-radius:6px;background:#d3dbea"></div>
<div class="a" style="left:1379px;top:616.37px;width:60px;height:28px;border-radius:6px;background:#d3dbea"></div>
<div class="t" style="left:438px;top:624.59px;font-size:16.67px;color:#f2f2f2;font-weight:normal;font-family:'Liberation Mono',monospace">Consulting Service description 1</div>
<div class="t" style="left:758px;top:624.59px;font-size:16.67px;color:#1a1a1a;font-weight:normal;font-family:'Liberation Mono',monospace">1</div>
<div class="t" style="left:1168px;top:624.59px;font-size:16.67px;color:#1a1a1a;font-weight:normal;font-family:'Liberation Mono',monospace">11</div>
<svg class="a" style="left:438px;top:638.37px;" width="320" height="4" viewBox="0 0 320 4"><path d="M0 3 L2.00 0.6 L4.00 3 L6.00 0.6 L8.00 3 L10.00 0.6 L12.00 3 L14.00 0.6 L16.00 3 L18.00 0.6 L20.00 3 L22.00 0.6 L24.00 3 L26.00 0.6 L28.00 3 L30.00 0.6 L32.00 3 L34.00 0.6 L36.00 3 L38.00 0.6 L40.00 3 L42.00 0.6 L44.00 3 L46.00 0.6 L48.00 3 L50.00 0.6 L52.00 3 L54.00 0.6 L56.00 3 L58.00 0.6 L60.00 3 L62.00 0.6 L64.00 3 L66.00 0.6 L68.00 3 L70.00 0.6 L72.00 3 L74.00 0.6 L76.00 3 L78.00 0.6 L80.00 3 L82.00 0.6 L84.00 3 L86.00 0.6 L88.00 3 L90.00 0.6 L92.00 3 L94.00 0.6 L96.00 3 L98.00 0.6 L100.00 3 L102.00 0.6 L104.00 3 L106.00 0.6 L108.00 3 L110.00 0.6 L112.00 3 L114.00 0.6 L116.00 3 L118.00 0.6 L120.00 3 L122.00 0.6 L124.00 3 L126.00 0.6 L128.00 3 L130.00 0.6 L132.00 3 L134.00 0.6 L136.00 3 L138.00 0.6 L140.00 3 L142.00 0.6 L144.00 3 L146.00 0.6 L148.00 3 L150.00 0.6 L152.00 3 L154.00 0.6 L156.00 3 L158.00 0.6 L160.00 3 L162.00 0.6 L164.00 3 L166.00 0.6 L168.00 3 L170.00 0.6 L172.00 3 L174.00 0.6 L176.00 3 L178.00 0.6 L180.00 3 L182.00 0.6 L184.00 3 L186.00 0.6 L188.00 3 L190.00 0.6 L192.00 3 L194.00 0.6 L196.00 3 L198.00 0.6 L200.00 3 L202.00 0.6 L204.00 3 L206.00 0.6 L208.00 3 L210.00 0.6 L212.00 3 L214.00 0.6 L216.00 3 L218.00 0.6 L220.00 3 L222.00 0.6 L224.00 3 L226.00 0.6 L228.00 3 L230.00 0.6 L232.00 3 L234.00 0.6 L236.00 3 L238.00 0.6 L240.00 3 L242.00 0.6 L244.00 3 L246.00 0.6 L248.00 3 L250.00 0.6 L252.00 3 L254.00 0.6 L256.00 3 L258.00 0.6 L260.00 3 L262.00 0.6 L264.00 3 L266.00 0.6 L268.00 3 L270.00 0.6 L272.00 3 L274.00 0.6 L276.00 3 L278.00 0.6 L280.00 3 L282.00 0.6 L284.00 3 L286.00 0.6 L288.00 3 L290.00 0.6 L292.00 3 L294.00 0.6 L296.00 3 L298.00 0.6 L300.00 3 L302.00 0.6 L304.00 3 L306.00 0.6 L308.00 3 L310.00 0.6 L312.00 3 L314.00 0.6 L316.00 3 L318.00 0.6 L320.00 3" stroke="#ef5a2a" stroke-width="1" fill="none"/></svg>
<svg class="a" style="left:1188px;top:638.37px;" width="10" height="4" viewBox="0 0 10 4"><path d="M0 3 L2.00 0.6 L4.00 3 L6.00 0.6 L8.00 3 L10.00 0.6 L12.00 3" stroke="#ef5a2a" stroke-width="1" fill="none"/></svg>
<div class="t" style="left:1308px;top:624.59px;font-size:16.67px;color:#2d3c6c;font-weight:normal;font-family:'Liberation Mono',monospace">1150.00</div>
<div class="t" style="left:1378px;top:624.59px;font-size:16.67px;color:#2d3c6c;font-weight:normal;font-family:'Liberation Mono',monospace">12650.</div>
<svg class="a" style="left:1378px;top:638.37px;" width="61" height="4" viewBox="0 0 61 4"><path d="M0 3 L2.00 0.6 L4.00 3 L6.00 0.6 L8.00 3 L10.00 0.6 L12.00 3 L14.00 0.6 L16.00 3 L18.00 0.6 L20.00 3 L22.00 0.6 L24.00 3 L26.00 0.6 L28.00 3 L30.00 0.6 L32.00 3 L34.00 0.6 L36.00 3 L38.00 0.6 L40.00 3 L42.00 0.6 L44.00 3 L46.00 0.6 L48.00 3 L50.00 0.6 L52.00 3 L54.00 0.6 L56.00 3 L58.00 0.6 L60.00 3 L62.00 0.6 L64.00 3" stroke="#ef5a2a" stroke-width="1" fill="none"/></svg>
<div class="a" style="left:437px;top:646.64px;width:1003px;height:33.77px;background:#fcfcfc"></div>
<div class="a" style="left:437px;top:650.14px;width:1001px;height:28px;background:#e3e9f4"></div>
<div class="a" style="left:438px;top:650.14px;width:320px;height:28px;border-radius:6px;background:#35567b"></div>
<div class="a" style="left:1188px;top:650.14px;width:9px;height:28px;border-radius:4px;background:#d3dbea"></div>
<div class="a" style="left:1308px;top:650.14px;width:69px;height:28px;border-radius:6px;background:#d3dbea"></div>
<div class="a" style="left:1379px;top:650.14px;width:60px;height:28px;border-radius:6px;background:#d3dbea"></div>
<div class="t" style="left:438px;top:658.36px;font-size:16.67px;color:#f2f2f2;font-weight:normal;font-family:'Liberation Mono',monospace">Consulting Service description 1</div>
<div class="t" style="left:758px;top:658.36px;font-size:16.67px;color:#1a1a1a;font-weight:normal;font-family:'Liberation Mono',monospace">2</div>
<div class="t" style="left:1168px;top:658.36px;font-size:16.67px;color:#1a1a1a;font-weight:normal;font-family:'Liberation Mono',monospace">12</div>
<svg class="a" style="left:438px;top:672.14px;" width="320" height="4" viewBox="0 0 320 4"><path d="M0 3 L2.00 0.6 L4.00 3 L6.00 0.6 L8.00 3 L10.00 0.6 L12.00 3 L14.00 0.6 L16.00 3 L18.00 0.6 L20.00 3 L22.00 0.6 L24.00 3 L26.00 0.6 L28.00 3 L30.00 0.6 L32.00 3 L34.00 0.6 L36.00 3 L38.00 0.6 L40.00 3 L42.00 0.6 L44.00 3 L46.00 0.6 L48.00 3 L50.00 0.6 L52.00 3 L54.00 0.6 L56.00 3 L58.00 0.6 L60.00 3 L62.00 0.6 L64.00 3 L66.00 0.6 L68.00 3 L70.00 0.6 L72.00 3 L74.00 0.6 L76.00 3 L78.00 0.6 L80.00 3 L82.00 0.6 L84.00 3 L86.00 0.6 L88.00 3 L90.00 0.6 L92.00 3 L94.00 0.6 L96.00 3 L98.00 0.6 L100.00 3 L102.00 0.6 L104.00 3 L106.00 0.6 L108.00 3 L110.00 0.6 L112.00 3 L114.00 0.6 L116.00 3 L118.00 0.6 L120.00 3 L122.00 0.6 L124.00 3 L126.00 0.6 L128.00 3 L130.00 0.6 L132.00 3 L134.00 0.6 L136.00 3 L138.00 0.6 L140.00 3 L142.00 0.6 L144.00 3 L146.00 0.6 L148.00 3 L150.00 0.6 L152.00 3 L154.00 0.6 L156.00 3 L158.00 0.6 L160.00 3 L162.00 0.6 L164.00 3 L166.00 0.6 L168.00 3 L170.00 0.6 L172.00 3 L174.00 0.6 L176.00 3 L178.00 0.6 L180.00 3 L182.00 0.6 L184.00 3 L186.00 0.6 L188.00 3 L190.00 0.6 L192.00 3 L194.00 0.6 L196.00 3 L198.00 0.6 L200.00 3 L202.00 0.6 L204.00 3 L206.00 0.6 L208.00 3 L210.00 0.6 L212.00 3 L214.00 0.6 L216.00 3 L218.00 0.6 L220.00 3 L222.00 0.6 L224.00 3 L226.00 0.6 L228.00 3 L230.00 0.6 L232.00 3 L234.00 0.6 L236.00 3 L238.00 0.6 L240.00 3 L242.00 0.6 L244.00 3 L246.00 0.6 L248.00 3 L250.00 0.6 L252.00 3 L254.00 0.6 L256.00 3 L258.00 0.6 L260.00 3 L262.00 0.6 L264.00 3 L266.00 0.6 L268.00 3 L270.00 0.6 L272.00 3 L274.00 0.6 L276.00 3 L278.00 0.6 L280.00 3 L282.00 0.6 L284.00 3 L286.00 0.6 L288.00 3 L290.00 0.6 L292.00 3 L294.00 0.6 L296.00 3 L298.00 0.6 L300.00 3 L302.00 0.6 L304.00 3 L306.00 0.6 L308.00 3 L310.00 0.6 L312.00 3 L314.00 0.6 L316.00 3 L318.00 0.6 L320.00 3" stroke="#ef5a2a" stroke-width="1" fill="none"/></svg>
<svg class="a" style="left:1188px;top:672.14px;" width="10" height="4" viewBox="0 0 10 4"><path d="M0 3 L2.00 0.6 L4.00 3 L6.00 0.6 L8.00 3 L10.00 0.6 L12.00 3" stroke="#ef5a2a" stroke-width="1" fill="none"/></svg>
<div class="t" style="left:1308px;top:658.36px;font-size:16.67px;color:#2d3c6c;font-weight:normal;font-family:'Liberation Mono',monospace">50.00</div>
<div class="t" style="left:1388px;top:658.36px;font-size:16.67px;color:#2d3c6c;font-weight:normal;font-family:'Liberation Mono',monospace">600.0</div>
<div class="a" style="left:437px;top:680.41px;width:1003px;height:33.77px;background:#f7f7f7"></div>
<div class="a" style="left:437px;top:683.91px;width:1001px;height:28px;background:#e3e9f4"></div>
<div class="a" style="left:438px;top:683.91px;width:320px;height:28px;border-radius:6px;background:#35567b"></div>
<div class="a" style="left:1188px;top:683.91px;width:9px;height:28px;border-radius:4px;background:#d3dbea"></div>
<div class="a" style="left:1308px;top:683.91px;width:69px;height:28px;border-radius:6px;background:#d3dbea"></div>
<div class="a" style="left:1379px;top:683.91px;width:60px;height:28px;border-radius:6px;background:#d3dbea"></div>
<div class="t" style="left:438px;top:692.13px;font-size:16.67px;color:#f2f2f2;font-weight:normal;font-family:'Liberation Mono',monospace">Consulting Service description 1</div>
<div class="t" style="left:758px;top:692.13px;font-size:16.67px;color:#1a1a1a;font-weight:normal;font-family:'Liberation Mono',monospace">3</div>
<div class="t" style="left:1168px;top:692.13px;font-size:16.67px;color:#1a1a1a;font-weight:normal;font-family:'Liberation Mono',monospace">13</div>
<svg class="a" style="left:438px;top:705.91px;" width="320" height="4" viewBox="0 0 320 4"><path d="M0 3 L2.00 0.6 L4.00 3 L6.00 0.6 L8.00 3 L10.00 0.6 L12.00 3 L14.00 0.6 L16.00 3 L18.00 0.6 L20.00 3 L22.00 0.6 L24.00 3 L26.00 0.6 L28.00 3 L30.00 0.6 L32.00 3 L34.00 0.6 L36.00 3 L38.00 0.6 L40.00 3 L42.00 0.6 L44.00 3 L46.00 0.6 L48.00 3 L50.00 0.6 L52.00 3 L54.00 0.6 L56.00 3 L58.00 0.6 L60.00 3 L62.00 0.6 L64.00 3 L66.00 0.6 L68.00 3 L70.00 0.6 L72.00 3 L74.00 0.6 L76.00 3 L78.00 0.6 L80.00 3 L82.00 0.6 L84.00 3 L86.00 0.6 L88.00 3 L90.00 0.6 L92.00 3 L94.00 0.6 L96.00 3 L98.00 0.6 L100.00 3 L102.00 0.6 L104.00 3 L106.00 0.6 L108.00 3 L110.00 0.6 L112.00 3 L114.00 0.6 L116.00 3 L118.00 0.6 L120.00 3 L122.00 0.6 L124.00 3 L126.00 0.6 L128.00 3 L130.00 0.6 L132.00 3 L134.00 0.6 L136.00 3 L138.00 0.6 L140.00 3 L142.00 0.6 L144.00 3 L146.00 0.6 L148.00 3 L150.00 0.6 L152.00 3 L154.00 0.6 L156.00 3 L158.00 0.6 L160.00 3 L162.00 0.6 L164.00 3 L166.00 0.6 L168.00 3 L170.00 0.6 L172.00 3 L174.00 0.6 L176.00 3 L178.00 0.6 L180.00 3 L182.00 0.6 L184.00 3 L186.00 0.6 L188.00 3 L190.00 0.6 L192.00 3 L194.00 0.6 L196.00 3 L198.00 0.6 L200.00 3 L202.00 0.6 L204.00 3 L206.00 0.6 L208.00 3 L210.00 0.6 L212.00 3 L214.00 0.6 L216.00 3 L218.00 0.6 L220.00 3 L222.00 0.6 L224.00 3 L226.00 0.6 L228.00 3 L230.00 0.6 L232.00 3 L234.00 0.6 L236.00 3 L238.00 0.6 L240.00 3 L242.00 0.6 L244.00 3 L246.00 0.6 L248.00 3 L250.00 0.6 L252.00 3 L254.00 0.6 L256.00 3 L258.00 0.6 L260.00 3 L262.00 0.6 L264.00 3 L266.00 0.6 L268.00 3 L270.00 0.6 L272.00 3 L274.00 0.6 L276.00 3 L278.00 0.6 L280.00 3 L282.00 0.6 L284.00 3 L286.00 0.6 L288.00 3 L290.00 0.6 L292.00 3 L294.00 0.6 L296.00 3 L298.00 0.6 L300.00 3 L302.00 0.6 L304.00 3 L306.00 0.6 L308.00 3 L310.00 0.6 L312.00 3 L314.00 0.6 L316.00 3 L318.00 0.6 L320.00 3" stroke="#ef5a2a" stroke-width="1" fill="none"/></svg>
<svg class="a" style="left:1188px;top:705.91px;" width="10" height="4" viewBox="0 0 10 4"><path d="M0 3 L2.00 0.6 L4.00 3 L6.00 0.6 L8.00 3 L10.00 0.6 L12.00 3" stroke="#ef5a2a" stroke-width="1" fill="none"/></svg>
<div class="t" style="left:1308px;top:692.13px;font-size:16.67px;color:#2d3c6c;font-weight:normal;font-family:'Liberation Mono',monospace">50.00</div>
<div class="t" style="left:1388px;top:692.13px;font-size:16.67px;color:#2d3c6c;font-weight:normal;font-family:'Liberation Mono',monospace">650.0</div>
<div class="a" style="left:437px;top:714.18px;width:1003px;height:33.77px;background:#fcfcfc"></div>
<div class="a" style="left:437px;top:717.68px;width:1001px;height:28px;background:#e3e9f4"></div>
<div class="a" style="left:438px;top:717.68px;width:320px;height:28px;border-radius:6px;background:#35567b"></div>
<div class="a" style="left:1188px;top:717.68px;width:9px;height:28px;border-radius:4px;background:#d3dbea"></div>
<div class="a" style="left:1308px;top:717.68px;width:69px;height:28px;border-radius:6px;background:#d3dbea"></div>
<div class="a" style="left:1379px;top:717.68px;width:60px;height:28px;border-radius:6px;background:#d3dbea"></div>
<div class="t" style="left:438px;top:725.90px;font-size:16.67px;color:#f2f2f2;font-weight:normal;font-family:'Liberation Mono',monospace">Consulting Service description 1</div>
<div class="t" style="left:758px;top:725.90px;font-size:16.67px;color:#1a1a1a;font-weight:normal;font-family:'Liberation Mono',monospace">4</div>
<div class="t" style="left:1168px;top:725.90px;font-size:16.67px;color:#1a1a1a;font-weight:normal;font-family:'Liberation Mono',monospace">14</div>
<svg class="a" style="left:438px;top:739.68px;" width="320" height="4" viewBox="0 0 320 4"><path d="M0 3 L2.00 0.6 L4.00 3 L6.00 0.6 L8.00 3 L10.00 0.6 L12.00 3 L14.00 0.6 L16.00 3 L18.00 0.6 L20.00 3 L22.00 0.6 L24.00 3 L26.00 0.6 L28.00 3 L30.00 0.6 L32.00 3 L34.00 0.6 L36.00 3 L38.00 0.6 L40.00 3 L42.00 0.6 L44.00 3 L46.00 0.6 L48.00 3 L50.00 0.6 L52.00 3 L54.00 0.6 L56.00 3 L58.00 0.6 L60.00 3 L62.00 0.6 L64.00 3 L66.00 0.6 L68.00 3 L70.00 0.6 L72.00 3 L74.00 0.6 L76.00 3 L78.00 0.6 L80.00 3 L82.00 0.6 L84.00 3 L86.00 0.6 L88.00 3 L90.00 0.6 L92.00 3 L94.00 0.6 L96.00 3 L98.00 0.6 L100.00 3 L102.00 0.6 L104.00 3 L106.00 0.6 L108.00 3 L110.00 0.6 L112.00 3 L114.00 0.6 L116.00 3 L118.00 0.6 L120.00 3 L122.00 0.6 L124.00 3 L126.00 0.6 L128.00 3 L130.00 0.6 L132.00 3 L134.00 0.6 L136.00 3 L138.00 0.6 L140.00 3 L142.00 0.6 L144.00 3 L146.00 0.6 L148.00 3 L150.00 0.6 L152.00 3 L154.00 0.6 L156.00 3 L158.00 0.6 L160.00 3 L162.00 0.6 L164.00 3 L166.00 0.6 L168.00 3 L170.00 0.6 L172.00 3 L174.00 0.6 L176.00 3 L178.00 0.6 L180.00 3 L182.00 0.6 L184.00 3 L186.00 0.6 L188.00 3 L190.00 0.6 L192.00 3 L194.00 0.6 L196.00 3 L198.00 0.6 L200.00 3 L202.00 0.6 L204.00 3 L206.00 0.6 L208.00 3 L210.00 0.6 L212.00 3 L214.00 0.6 L216.00 3 L218.00 0.6 L220.00 3 L222.00 0.6 L224.00 3 L226.00 0.6 L228.00 3 L230.00 0.6 L232.00 3 L234.00 0.6 L236.00 3 L238.00 0.6 L240.00 3 L242.00 0.6 L244.00 3 L246.00 0.6 L248.00 3 L250.00 0.6 L252.00 3 L254.00 0.6 L256.00 3 L258.00 0.6 L260.00 3 L262.00 0.6 L264.00 3 L266.00 0.6 L268.00 3 L270.00 0.6 L272.00 3 L274.00 0.6 L276.00 3 L278.00 0.6 L280.00 3 L282.00 0.6 L284.00 3 L286.00 0.6 L288.00 3 L290.00 0.6 L292.00 3 L294.00 0.6 L296.00 3 L298.00 0.6 L300.00 3 L302.00 0.6 L304.00 3 L306.00 0.6 L308.00 3 L310.00 0.6 L312.00 3 L314.00 0.6 L316.00 3 L318.00 0.6 L320.00 3" stroke="#ef5a2a" stroke-width="1" fill="none"/></svg>
<svg class="a" style="left:1188px;top:739.68px;" width="10" height="4" viewBox="0 0 10 4"><path d="M0 3 L2.00 0.6 L4.00 3 L6.00 0.6 L8.00 3 L10.00 0.6 L12.00 3" stroke="#ef5a2a" stroke-width="1" fill="none"/></svg>
<div class="t" style="left:1308px;top:725.90px;font-size:16.67px;color:#2d3c6c;font-weight:normal;font-family:'Liberation Mono',monospace">50.00</div>
<div class="t" style="left:1388px;top:725.90px;font-size:16.67px;color:#2d3c6c;font-weight:normal;font-family:'Liberation Mono',monospace">700.0</div>
<div class="a" style="left:437px;top:747.95px;width:1003px;height:33.77px;background:#f7f7f7"></div>
<div class="a" style="left:437px;top:751.45px;width:1001px;height:28px;background:#e3e9f4"></div>
<div class="a" style="left:438px;top:751.45px;width:320px;height:28px;border-radius:6px;background:#35567b"></div>
<div class="a" style="left:1188px;top:751.45px;width:9px;height:28px;border-radius:4px;background:#d3dbea"></div>
<div class="a" style="left:1308px;top:751.45px;width:69px;height:28px;border-radius:6px;background:#d3dbea"></div>
<div class="a" style="left:1379px;top:751.45px;width:60px;height:28px;border-radius:6px;background:#d3dbea"></div>
<div class="t" style="left:438px;top:759.67px;font-size:16.67px;color:#f2f2f2;font-weight:normal;font-family:'Liberation Mono',monospace">Consulting Service description 1</div>
<div class="t" style="left:758px;top:759.67px;font-size:16.67px;color:#1a1a1a;font-weight:normal;font-family:'Liberation Mono',monospace">5</div>
<div class="t" style="left:1168px;top:759.67px;font-size:16.67px;color:#1a1a1a;font-weight:normal;font-family:'Liberation Mono',monospace">15</div>
<svg class="a" style="left:438px;top:773.45px;" width="320" height="4" viewBox="0 0 320 4"><path d="M0 3 L2.00 0.6 L4.00 3 L6.00 0.6 L8.00 3 L10.00 0.6 L12.00 3 L14.00 0.6 L16.00 3 L18.00 0.6 L20.00 3 L22.00 0.6 L24.00 3 L26.00 0.6 L28.00 3 L30.00 0.6 L32.00 3 L34.00 0.6 L36.00 3 L38.00 0.6 L40.00 3 L42.00 0.6 L44.00 3 L46.00 0.6 L48.00 3 L50.00 0.6 L52.00 3 L54.00 0.6 L56.00 3 L58.00 0.6 L60.00 3 L62.00 0.6 L64.00 3 L66.00 0.6 L68.00 3 L70.00 0.6 L72.00 3 L74.00 0.6 L76.00 3 L78.00 0.6 L80.00 3 L82.00 0.6 L84.00 3 L86.00 0.6 L88.00 3 L90.00 0.6 L92.00 3 L94.00 0.6 L96.00 3 L98.00 0.6 L100.00 3 L102.00 0.6 L104.00 3 L106.00 0.6 L108.00 3 L110.00 0.6 L112.00 3 L114.00 0.6 L116.00 3 L118.00 0.6 L120.00 3 L122.00 0.6 L124.00 3 L126.00 0.6 L128.00 3 L130.00 0.6 L132.00 3 L134.00 0.6 L136.00 3 L138.00 0.6 L140.00 3 L142.00 0.6 L144.00 3 L146.00 0.6 L148.00 3 L150.00 0.6 L152.00 3 L154.00 0.6 L156.00 3 L158.00 0.6 L160.00 3 L162.00 0.6 L164.00 3 L166.00 0.6 L168.00 3 L170.00 0.6 L172.00 3 L174.00 0.6 L176.00 3 L178.00 0.6 L180.00 3 L182.00 0.6 L184.00 3 L186.00 0.6 L188.00 3 L190.00 0.6 L192.00 3 L194.00 0.6 L196.00 3 L198.00 0.6 L200.00 3 L202.00 0.6 L204.00 3 L206.00 0.6 L208.00 3 L210.00 0.6 L212.00 3 L214.00 0.6 L216.00 3 L218.00 0.6 L220.00 3 L222.00 0.6 L224.00 3 L226.00 0.6 L228.00 3 L230.00 0.6 L232.00 3 L234.00 0.6 L236.00 3 L238.00 0.6 L240.00 3 L242.00 0.6 L244.00 3 L246.00 0.6 L248.00 3 L250.00 0.6 L252.00 3 L254.00 0.6 L256.00 3 L258.00 0.6 L260.00 3 L262.00 0.6 L264.00 3 L266.00 0.6 L268.00 3 L270.00 0.6 L272.00 3 L274.00 0.6 L276.00 3 L278.00 0.6 L280.00 3 L282.00 0.6 L284.00 3 L286.00 0.6 L288.00 3 L290.00 0.6 L292.00 3 L294.00 0.6 L296.00 3 L298.00 0.6 L300.00 3 L302.00 0.6 L304.00 3 L306.00 0.6 L308.00 3 L310.00 0.6 L312.00 3 L314.00 0.6 L316.00 3 L318.00 0.6 L320.00 3" stroke="#ef5a2a" stroke-width="1" fill="none"/></svg>
<svg class="a" style="left:1188px;top:773.45px;" width="10" height="4" viewBox="0 0 10 4"><path d="M0 3 L2.00 0.6 L4.00 3 L6.00 0.6 L8.00 3 L10.00 0.6 L12.00 3" stroke="#ef5a2a" stroke-width="1" fill="none"/></svg>
<div class="t" style="left:1308px;top:759.67px;font-size:16.67px;color:#2d3c6c;font-weight:normal;font-family:'Liberation Mono',monospace">50.00</div>
<div class="t" style="left:1388px;top:759.67px;font-size:16.67px;color:#2d3c6c;font-weight:normal;font-family:'Liberation Mono',monospace">750.0</div>
<div class="a" style="left:437px;top:781.72px;width:1003px;height:33.77px;background:#fcfcfc"></div>
<div class="a" style="left:437px;top:785.22px;width:1001px;height:28px;background:#e3e9f4"></div>
<div class="a" style="left:438px;top:785.22px;width:320px;height:28px;border-radius:6px;background:#35567b"></div>
<div class="a" style="left:1188px;top:785.22px;width:9px;height:28px;border-radius:4px;background:#d3dbea"></div>
<div class="a" style="left:1308px;top:785.22px;width:69px;height:28px;border-radius:6px;background:#d3dbea"></div>
<div class="a" style="left:1379px;top:785.22px;width:60px;height:28px;border-radius:6px;background:#d3dbea"></div>
<div class="t" style="left:438px;top:793.44px;font-size:16.67px;color:#f2f2f2;font-weight:normal;font-family:'Liberation Mono',monospace">Consulting Service description 1</div>
<div class="t" style="left:758px;top:793.44px;font-size:16.67px;color:#1a1a1a;font-weight:normal;font-family:'Liberation Mono',monospace">6</div>
<div class="t" style="left:1168px;top:793.44px;font-size:16.67px;color:#1a1a1a;font-weight:normal;font-family:'Liberation Mono',monospace">16</div>
<svg class="a" style="left:438px;top:807.22px;" width="320" height="4" viewBox="0 0 320 4"><path d="M0 3 L2.00 0.6 L4.00 3 L6.00 0.6 L8.00 3 L10.00 0.6 L12.00 3 L14.00 0.6 L16.00 3 L18.00 0.6 L20.00 3 L22.00 0.6 L24.00 3 L26.00 0.6 L28.00 3 L30.00 0.6 L32.00 3 L34.00 0.6 L36.00 3 L38.00 0.6 L40.00 3 L42.00 0.6 L44.00 3 L46.00 0.6 L48.00 3 L50.00 0.6 L52.00 3 L54.00 0.6 L56.00 3 L58.00 0.6 L60.00 3 L62.00 0.6 L64.00 3 L66.00 0.6 L68.00 3 L70.00 0.6 L72.00 3 L74.00 0.6 L76.00 3 L78.00 0.6 L80.00 3 L82.00 0.6 L84.00 3 L86.00 0.6 L88.00 3 L90.00 0.6 L92.00 3 L94.00 0.6 L96.00 3 L98.00 0.6 L100.00 3 L102.00 0.6 L104.00 3 L106.00 0.6 L108.00 3 L110.00 0.6 L112.00 3 L114.00 0.6 L116.00 3 L118.00 0.6 L120.00 3 L122.00 0.6 L124.00 3 L126.00 0.6 L128.00 3 L130.00 0.6 L132.00 3 L134.00 0.6 L136.00 3 L138.00 0.6 L140.00 3 L142.00 0.6 L144.00 3 L146.00 0.6 L148.00 3 L150.00 0.6 L152.00 3 L154.00 0.6 L156.00 3 L158.00 0.6 L160.00 3 L162.00 0.6 L164.00 3 L166.00 0.6 L168.00 3 L170.00 0.6 L172.00 3 L174.00 0.6 L176.00 3 L178.00 0.6 L180.00 3 L182.00 0.6 L184.00 3 L186.00 0.6 L188.00 3 L190.00 0.6 L192.00 3 L194.00 0.6 L196.00 3 L198.00 0.6 L200.00 3 L202.00 0.6 L204.00 3 L206.00 0.6 L208.00 3 L210.00 0.6 L212.00 3 L214.00 0.6 L216.00 3 L218.00 0.6 L220.00 3 L222.00 0.6 L224.00 3 L226.00 0.6 L228.00 3 L230.00 0.6 L232.00 3 L234.00 0.6 L236.00 3 L238.00 0.6 L240.00 3 L242.00 0.6 L244.00 3 L246.00 0.6 L248.00 3 L250.00 0.6 L252.00 3 L254.00 0.6 L256.00 3 L258.00 0.6 L260.00 3 L262.00 0.6 L264.00 3 L266.00 0.6 L268.00 3 L270.00 0.6 L272.00 3 L274.00 0.6 L276.00 3 L278.00 0.6 L280.00 3 L282.00 0.6 L284.00 3 L286.00 0.6 L288.00 3 L290.00 0.6 L292.00 3 L294.00 0.6 L296.00 3 L298.00 0.6 L300.00 3 L302.00 0.6 L304.00 3 L306.00 0.6 L308.00 3 L310.00 0.6 L312.00 3 L314.00 0.6 L316.00 3 L318.00 0.6 L320.00 3" stroke="#ef5a2a" stroke-width="1" fill="none"/></svg>
<svg class="a" style="left:1188px;top:807.22px;" width="10" height="4" viewBox="0 0 10 4"><path d="M0 3 L2.00 0.6 L4.00 3 L6.00 0.6 L8.00 3 L10.00 0.6 L12.00 3" stroke="#ef5a2a" stroke-width="1" fill="none"/></svg>
<div class="t" style="left:1308px;top:793.44px;font-size:16.67px;color:#2d3c6c;font-weight:normal;font-family:'Liberation Mono',monospace">50.00</div>
<div class="t" style="left:1388px;top:793.44px;font-size:16.67px;color:#2d3c6c;font-weight:normal;font-family:'Liberation Mono',monospace">800.0</div>
<div class="a" style="left:437px;top:815.49px;width:1003px;height:33.77px;background:#f7f7f7"></div>
<div class="t" style="left:1248px;top:827.21px;font-size:16.67px;color:#222;font-weight:normal;font-family:'Liberation Mono',monospace">SUBTOTAL</div>
<div class="t" style="left:1398px;top:827.21px;font-size:16.67px;color:#222;font-weight:normal;font-family:'Liberation Mono',monospace">23,9</div>
<div class="a" style="left:437px;top:849.26px;width:1003px;height:33.77px;background:#fcfcfc"></div>
<div class="t" style="left:1168px;top:860.98px;font-size:16.67px;color:#222;font-weight:normal;font-family:'Liberation Mono',monospace">PST</div>
<div class="t" style="left:1308px;top:860.98px;font-size:16.67px;color:#222;font-weight:normal;font-family:'Liberation Mono',monospace">8.000%</div>
<div class="t" style="left:1428px;top:860.98px;font-size:16.67px;color:#222;font-weight:normal;font-family:'Liberation Mono',monospace">1</div>
<div class="a" style="left:437px;top:883.03px;width:1003px;height:33.77px;background:#f7f7f7"></div>
<div class="t" style="left:438px;top:894.75px;font-size:16.67px;color:#222;font-weight:normal;font-family:'Liberation Mono',monospace">NOTES:</div>
<div class="t" style="left:1168px;top:894.75px;font-size:16.67px;color:#222;font-weight:normal;font-family:'Liberation Mono',monospace">GST</div>
<div class="t" style="left:1308px;top:894.75px;font-size:16.67px;color:#222;font-weight:normal;font-family:'Liberation Mono',monospace">6.000%</div>
<div class="t" style="left:1428px;top:894.75px;font-size:16.67px;color:#222;font-weight:normal;font-family:'Liberation Mono',monospace">1</div>
<div class="a" style="left:437px;top:916.8px;width:1003px;height:33.77px;background:#fcfcfc"></div>
</div>
<div class="t" style="left:373px;width:52px;text-align:right;top:253.64px;font-size:16px;color:#465060;font-weight:bold;font-family:'Liberation Mono',monospace">18</div>
<div class="t" style="left:373px;width:52px;text-align:right;top:287.41px;font-size:16px;color:#465060;font-weight:bold;font-family:'Liberation Mono',monospace">19</div>
<div class="t" style="left:373px;width:52px;text-align:right;top:321.18px;font-size:16px;color:#465060;font-weight:bold;font-family:'Liberation Mono',monospace">20</div>
<div class="t" style="left:373px;width:52px;text-align:right;top:354.95px;font-size:16px;color:#465060;font-weight:bold;font-family:'Liberation Mono',monospace">21</div>
<div class="t" style="left:373px;width:52px;text-align:right;top:388.72px;font-size:16px;color:#465060;font-weight:bold;font-family:'Liberation Mono',monospace">22</div>
<div class="t" style="left:373px;width:52px;text-align:right;top:422.49px;font-size:16px;color:#465060;font-weight:bold;font-family:'Liberation Mono',monospace">23</div>
<div class="t" style="left:373px;width:52px;text-align:right;top:456.26px;font-size:16px;color:#465060;font-weight:bold;font-family:'Liberation Mono',monospace">24</div>
<div class="t" style="left:373px;width:52px;text-align:right;top:490.03px;font-size:16px;color:#465060;font-weight:bold;font-family:'Liberation Mono',monospace">25</div>
<div class="t" style="left:373px;width:52px;text-align:right;top:523.80px;font-size:16px;color:#465060;font-weight:bold;font-family:'Liberation Mono',monospace">26</div>
<div class="t" style="left:373px;width:52px;text-align:right;top:557.57px;font-size:16px;color:#465060;font-weight:bold;font-family:'Liberation Mono',monospace">27</div>
<div class="t" style="left:373px;width:52px;text-align:right;top:591.34px;font-size:16px;color:#465060;font-weight:bold;font-family:'Liberation Mono',monospace">28</div>
<div class="t" style="left:373px;width:52px;text-align:right;top:625.11px;font-size:16px;color:#465060;font-weight:bold;font-family:'Liberation Mono',monospace">29</div>
<div class="t" style="left:373px;width:52px;text-align:right;top:658.88px;font-size:16px;color:#465060;font-weight:bold;font-family:'Liberation Mono',monospace">30</div>
<div class="t" style="left:373px;width:52px;text-align:right;top:692.65px;font-size:16px;color:#465060;font-weight:bold;font-family:'Liberation Mono',monospace">31</div>
<div class="t" style="left:373px;width:52px;text-align:right;top:726.42px;font-size:16px;color:#465060;font-weight:bold;font-family:'Liberation Mono',monospace">32</div>
<div class="t" style="left:373px;width:52px;text-align:right;top:760.19px;font-size:16px;color:#465060;font-weight:bold;font-family:'Liberation Mono',monospace">33</div>
<div class="t" style="left:373px;width:52px;text-align:right;top:793.96px;font-size:16px;color:#465060;font-weight:bold;font-family:'Liberation Mono',monospace">34</div>
<div class="t" style="left:373px;width:52px;text-align:right;top:827.73px;font-size:16px;color:#465060;font-weight:bold;font-family:'Liberation Mono',monospace">35</div>
<div class="t" style="left:373px;width:52px;text-align:right;top:861.50px;font-size:16px;color:#465060;font-weight:bold;font-family:'Liberation Mono',monospace">36</div>
<div class="t" style="left:373px;width:52px;text-align:right;top:895.27px;font-size:16px;color:#465060;font-weight:bold;font-family:'Liberation Mono',monospace">37</div>
<div class="t" style="left:373px;width:52px;text-align:right;top:929.04px;font-size:16px;color:#465060;font-weight:bold;font-family:'Liberation Mono',monospace">38</div>
<div class="a" style="left:1440px;top:243px;width:20px;height:718px;background:#f0f0f0"></div>
<div class="a" style="left:1440px;top:429px;width:19px;height:280px;background:#cdcdcd"></div>
<svg class="a" style="left:1442px;top:245px;" width="16" height="18" viewBox="0 0 16 18"><path d="M8 1 V17" stroke="#111" stroke-width="1.3"/><path d="M4.5 4 L8 0.5 L11.5 4Z M4.5 14 L8 17.5 L11.5 14Z" fill="#111"/><path d="M1 8 H15 M1 10.5 H15" stroke="#111" stroke-width="1.3"/></svg>
<svg class="a" style="left:1444px;top:272px;" width="12" height="8" viewBox="0 0 12 8"><path d="M1 7 L6 2 L11 7" stroke="#555" stroke-width="1.8" fill="none"/></svg>
<svg class="a" style="left:1444px;top:946px;" width="12" height="8" viewBox="0 0 12 8"><path d="M1 1 L6 6 L11 1" stroke="#555" stroke-width="1.8" fill="none"/></svg>
<div class="a" style="left:360px;top:961px;width:1100px;height:21px;background:#f0f0f0"></div>
<div class="a" style="left:381px;top:962px;width:769px;height:18px;background:#cdcdcd"></div>
<svg class="a" style="left:366px;top:966px;" width="9" height="12" viewBox="0 0 9 12"><path d="M7 1 L2 6 L7 11" stroke="#555" stroke-width="1.8" fill="none"/></svg>
<svg class="a" style="left:1424px;top:966px;" width="9" height="12" viewBox="0 0 9 12"><path d="M2 1 L7 6 L2 11" stroke="#555" stroke-width="1.8" fill="none"/></svg>
<div class="a" style="left:358px;top:983px;width:1104px;height:36px;background:#eef1f6;border:1px solid #c4c4c4;border-top:none"></div>
<div class="a" style="left:360px;top:987px;width:661px;height:27px;border-left:1px solid #9a9a9a;border-top:1px solid #9a9a9a;border-right:1px solid #fff;border-bottom:1px solid #fff;background:#eef1f6"></div>
<svg class="a" style="left:364px;top:994px;" width="14" height="13" viewBox="0 0 14 13"><path d="M7 0.5 L13.5 12.5 H0.5Z" fill="#f6c417" stroke="#f6c417" stroke-linejoin="round"/><rect x="6.2" y="4" width="1.6" height="5" fill="#111"/><rect x="6.2" y="10" width="1.6" height="1.6" fill="#111"/></svg>
<div class="t" style="left:384px;top:993px;font-size:15px;color:#1e1e1e;font-weight:normal;">Non-blank character on right at (28,32)</div>
<div class="a" style="left:1024px;top:987px;width:155px;height:27px;border-left:1px solid #9a9a9a;border-top:1px solid #9a9a9a;border-right:1px solid #fff;border-bottom:1px solid #fff;background:#eef1f6"></div>
<div class="t" style="left:1028px;top:993px;font-size:15px;color:#3030e8;font-weight:normal;">DescriptionInvoice.txt</div>
<div class="a" style="left:1182px;top:987px;width:2px;height:27px;background:#b8b8b8"></div>
<div class="t" style="left:1185px;top:993px;font-size:15px;color:#1e1e1e;font-weight:normal;">Line:</div>
<div class="t" style="left:1230px;top:993px;font-size:15px;color:#1e1e1e;font-weight:bold;">18</div>
<div class="a" style="left:1253px;top:987px;width:2px;height:27px;background:#b8b8b8"></div>
<div class="t" style="left:1257px;top:993px;font-size:15px;color:#1e1e1e;font-weight:normal;">Col:</div>
<div class="t" style="left:1297px;top:993px;font-size:15px;color:#1e1e1e;font-weight:bold;">17</div>
<div class="a" style="left:1322px;top:987px;width:2px;height:27px;background:#b8b8b8"></div>
<svg class="a" style="left:1330px;top:992px;" width="17" height="17" viewBox="0 0 17 17"><circle cx="6.5" cy="6.5" r="5.2" fill="none" stroke="#333" stroke-width="1.6"/><path d="M10 10 L15.5 15.5" stroke="#333" stroke-width="2.6"/><path d="M4 6.5 H9" stroke="#2c6fbf" stroke-width="1.6"/></svg>
<svg class="a" style="left:1358px;top:992px;" width="17" height="17" viewBox="0 0 17 17"><circle cx="6.5" cy="6.5" r="5.2" fill="none" stroke="#333" stroke-width="1.6"/><path d="M10 10 L15.5 15.5" stroke="#333" stroke-width="2.6"/><path d="M4 6.5 H9 M6.5 4 V9" stroke="#2c6fbf" stroke-width="1.6"/></svg>
<div class="a" style="left:1384px;top:988px;width:44px;height:27px;background:#fff"></div>
<div class="t" style="left:1388px;top:993px;font-size:15px;color:#1e1e1e;font-weight:normal;">100%</div>
<svg class="a" style="left:1431px;top:1001px;" width="7" height="4" viewBox="0 0 7 4"><path d="M0 0 H7 L3.5 4 Z" fill="#111"/></svg>
<div class="t" style="left:38px;top:1029.5px;font-size:14.5px;color:#444;font-weight:normal;">Job Progress</div>
<div class="t" style="left:136px;top:1029.5px;font-size:14.5px;color:#444;font-weight:normal;">Verify</div>
<div class="t" style="left:187px;top:1029.5px;font-size:14.5px;color:#444;font-weight:normal;">Data Preview</div>
<div class="a" style="left:38px;top:1051px;width:83px;height:7px;background:#c4c4c4"></div>
<div class="a" style="left:136px;top:1051px;width:36px;height:7px;background:#c4c4c4"></div>
<div class="a" style="left:187px;top:1051px;width:85px;height:7px;background:#c4c4c4"></div>
<div class="a" style="left:0px;top:1058px;width:1920px;height:1px;background:#dadada"></div>
<div class="a" style="left:1470px;top:118px;width:442px;height:864px;border:2px solid #c6c6c6;border-right-width:2px;background:#fff"></div>
<div class="a" style="left:1472px;top:120px;width:438px;height:25px;background:#f0f0f0"></div>
<div class="t" style="left:1476px;top:124.30px;font-size:14.3px;color:#333;font-weight:normal">Field Properties</div>
<svg class="a" style="left:1584px;top:129px;" width="270" height="7" viewBox="0 0 270 7"><rect x="0" y="0" width="1.5" height="1.5" fill="#c0c0c0"/><rect x="0" y="5" width="1.5" height="1.5" fill="#c0c0c0"/><rect x="2.5" y="2.5" width="1.5" height="1.5" fill="#c0c0c0"/><rect x="5" y="0" width="1.5" height="1.5" fill="#c0c0c0"/><rect x="5" y="5" width="1.5" height="1.5" fill="#c0c0c0"/><rect x="7.5" y="2.5" width="1.5" height="1.5" fill="#c0c0c0"/><rect x="10" y="0" width="1.5" height="1.5" fill="#c0c0c0"/><rect x="10" y="5" width="1.5" height="1.5" fill="#c0c0c0"/><rect x="12.5" y="2.5" width="1.5" height="1.5" fill="#c0c0c0"/><rect x="15" y="0" width="1.5" height="1.5" fill="#c0c0c0"/><rect x="15" y="5" width="1.5" height="1.5" fill="#c0c0c0"/><rect x="17.5" y="2.5" width="1.5" height="1.5" fill="#c0c0c0"/><rect x="20" y="0" width="1.5" height="1.5" fill="#c0c0c0"/><rect x="20" y="5" width="1.5" height="1.5" fill="#c0c0c0"/><rect x="22.5" y="2.5" width="1.5" height="1.5" fill="#c0c0c0"/><rect x="25" y="0" width="1.5" height="1.5" fill="#c0c0c0"/><rect x="25" y="5" width="1.5" height="1.5" fill="#c0c0c0"/><rect x="27.5" y="2.5" width="1.5" height="1.5" fill="#c0c0c0"/><rect x="30" y="0" width="1.5" height="1.5" fill="#c0c0c0"/><rect x="30" y="5" width="1.5" height="1.5" fill="#c0c0c0"/><rect x="32.5" y="2.5" width="1.5" height="1.5" fill="#c0c0c0"/><rect x="35" y="0" width="1.5" height="1.5" fill="#c0c0c0"/><rect x="35" y="5" width="1.5" height="1.5" fill="#c0c0c0"/><rect x="37.5" y="2.5" width="1.5" height="1.5" fill="#c0c0c0"/><rect x="40" y="0" width="1.5" height="1.5" fill="#c0c0c0"/><rect x="40" y="5" width="1.5" height="1.5" fill="#c0c0c0"/><rect x="42.5" y="2.5" width="1.5" height="1.5" fill="#c0c0c0"/><rect x="45" y="0" width="1.5" height="1.5" fill="#c0c0c0"/><rect x="45" y="5" width="1.5" height="1.5" fill="#c0c0c0"/><rect x="47.5" y="2.5" width="1.5" height="1.5" fill="#c0c0c0"/><rect x="50" y="0" width="1.5" height="1.5" fill="#c0c0c0"/><rect x="50" y="5" width="1.5" height="1.5" fill="#c0c0c0"/><rect x="52.5" y="2.5" width="1.5" height="1.5" fill="#c0c0c0"/><rect x="55" y="0" width="1.5" height="1.5" fill="#c0c0c0"/><rect x="55" y="5" width="1.5" height="1.5" fill="#c0c0c0"/><rect x="57.5" y="2.5" width="1.5" height="1.5" fill="#c0c0c0"/><rect x="60" y="0" width="1.5" height="1.5" fill="#c0c0c0"/><rect x="60" y="5" width="1.5" height="1.5" fill="#c0c0c0"/><rect x="62.5" y="2.5" width="1.5" height="1.5" fill="#c0c0c0"/><rect x="65" y="0" width="1.5" height="1.5" fill="#c0c0c0"/><rect x="65" y="5" width="1.5" height="1.5" fill="#c0c0c0"/><rect x="67.5" y="2.5" width="1.5" height="1.5" fill="#c0c0c0"/><rect x="70" y="0" width="1.5" height="1.5" fill="#c0c0c0"/><rect x="70" y="5" width="1.5" height="1.5" fill="#c0c0c0"/><rect x="72.5" y="2.5" width="1.5" height="1.5" fill="#c0c0c0"/><rect x="75" y="0" width="1.5" height="1.5" fill="#c0c0c0"/><rect x="75" y="5" width="1.5" height="1.5" fill="#c0c0c0"/><rect x="77.5" y="2.5" width="1.5" height="1.5" fill="#c0c0c0"/><rect x="80" y="0" width="1.5" height="1.5" fill="#c0c0c0"/><rect x="80" y="5" width="1.5" height="1.5" fill="#c0c0c0"/><rect x="82.5" y="2.5" width="1.5" height="1.5" fill="#c0c0c0"/><rect x="85" y="0" width="1.5" height="1.5" fill="#c0c0c0"/><rect x="85" y="5" width="1.5" height="1.5" fill="#c0c0c0"/><rect x="87.5" y="2.5" width="1.5" height="1.5" fill="#c0c0c0"/><rect x="90" y="0" width="1.5" height="1.5" fill="#c0c0c0"/><rect x="90" y="5" width="1.5" height="1.5" fill="#c0c0c0"/><rect x="92.5" y="2.5" width="1.5" height="1.5" fill="#c0c0c0"/><rect x="95" y="0" width="1.5" height="1.5" fill="#c0c0c0"/><rect x="95" y="5" width="1.5" height="1.5" fill="#c0c0c0"/><rect x="97.5" y="2.5" width="1.5" height="1.5" fill="#c0c0c0"/><rect x="100" y="0" width="1.5" height="1.5" fill="#c0c0c0"/><rect x="100" y="5" width="1.5" height="1.5" fill="#c0c0c0"/><rect x="102.5" y="2.5" width="1.5" height="1.5" fill="#c0c0c0"/><rect x="105" y="0" width="1.5" height="1.5" fill="#c0c0c0"/><rect x="105" y="5" width="1.5" height="1.5" fill="#c0c0c0"/><rect x="107.5" y="2.5" width="1.5" height="1.5" fill="#c0c0c0"/><rect x="110" y="0" width="1.5" height="1.5" fill="#c0c0c0"/><rect x="110" y="5" width="1.5" height="1.5" fill="#c0c0c0"/><rect x="112.5" y="2.5" width="1.5" height="1.5" fill="#c0c0c0"/><rect x="115" y="0" width="1.5" height="1.5" fill="#c0c0c0"/><rect x="115" y="5" width="1.5" height="1.5" fill="#c0c0c0"/><rect x="117.5" y="2.5" width="1.5" height="1.5" fill="#c0c0c0"/><rect x="120" y="0" width="1.5" height="1.5" fill="#c0c0c0"/><rect x="120" y="5" width="1.5" height="1.5" fill="#c0c0c0"/><rect x="122.5" y="2.5" width="1.5" height="1.5" fill="#c0c0c0"/><rect x="125" y="0" width="1.5" height="1.5" fill="#c0c0c0"/><rect x="125" y="5" width="1.5" height="1.5" fill="#c0c0c0"/><rect x="127.5" y="2.5" width="1.5" height="1.5" fill="#c0c0c0"/><rect x="130" y="0" width="1.5" height="1.5" fill="#c0c0c0"/><rect x="130" y="5" width="1.5" height="1.5" fill="#c0c0c0"/><rect x="132.5" y="2.5" width="1.5" height="1.5" fill="#c0c0c0"/><rect x="135" y="0" width="1.5" height="1.5" fill="#c0c0c0"/><rect x="135" y="5" width="1.5" height="1.5" fill="#c0c0c0"/><rect x="137.5" y="2.5" width="1.5" height="1.5" fill="#c0c0c0"/><rect x="140" y="0" width="1.5" height="1.5" fill="#c0c0c0"/><rect x="140" y="5" width="1.5" height="1.5" fill="#c0c0c0"/><rect x="142.5" y="2.5" width="1.5" height="1.5" fill="#c0c0c0"/><rect x="145" y="0" width="1.5" height="1.5" fill="#c0c0c0"/><rect x="145" y="5" width="1.5" height="1.5" fill="#c0c0c0"/><rect x="147.5" y="2.5" width="1.5" height="1.5" fill="#c0c0c0"/><rect x="150" y="0" width="1.5" height="1.5" fill="#c0c0c0"/><rect x="150" y="5" width="1.5" height="1.5" fill="#c0c0c0"/><rect x="152.5" y="2.5" width="1.5" height="1.5" fill="#c0c0c0"/><rect x="155" y="0" width="1.5" height="1.5" fill="#c0c0c0"/><rect x="155" y="5" width="1.5" height="1.5" fill="#c0c0c0"/><rect x="157.5" y="2.5" width="1.5" height="1.5" fill="#c0c0c0"/><rect x="160" y="0" width="1.5" height="1.5" fill="#c0c0c0"/><rect x="160" y="5" width="1.5" height="1.5" fill="#c0c0c0"/><rect x="162.5" y="2.5" width="1.5" height="1.5" fill="#c0c0c0"/><rect x="165" y="0" width="1.5" height="1.5" fill="#c0c0c0"/><rect x="165" y="5" width="1.5" height="1.5" fill="#c0c0c0"/><rect x="167.5" y="2.5" width="1.5" height="1.5" fill="#c0c0c0"/><rect x="170" y="0" width="1.5" height="1.5" fill="#c0c0c0"/><rect x="170" y="5" width="1.5" height="1.5" fill="#c0c0c0"/><rect x="172.5" y="2.5" width="1.5" height="1.5" fill="#c0c0c0"/><rect x="175" y="0" width="1.5" height="1.5" fill="#c0c0c0"/><rect x="175" y="5" width="1.5" height="1.5" fill="#c0c0c0"/><rect x="177.5" y="2.5" width="1.5" height="1.5" fill="#c0c0c0"/><rect x="180" y="0" width="1.5" height="1.5" fill="#c0c0c0"/><rect x="180" y="5" width="1.5" height="1.5" fill="#c0c0c0"/><rect x="182.5" y="2.5" width="1.5" height="1.5" fill="#c0c0c0"/><rect x="185" y="0" width="1.5" height="1.5" fill="#c0c0c0"/><rect x="185" y="5" width="1.5" height="1.5" fill="#c0c0c0"/><rect x="187.5" y="2.5" width="1.5" height="1.5" fill="#c0c0c0"/><rect x="190" y="0" width="1.5" height="1.5" fill="#c0c0c0"/><rect x="190" y="5" width="1.5" height="1.5" fill="#c0c0c0"/><rect x="192.5" y="2.5" width="1.5" height="1.5" fill="#c0c0c0"/><rect x="195" y="0" width="1.5" height="1.5" fill="#c0c0c0"/><rect x="195" y="5" width="1.5" height="1.5" fill="#c0c0c0"/><rect x="197.5" y="2.5" width="1.5" height="1.5" fill="#c0c0c0"/><rect x="200" y="0" width="1.5" height="1.5" fill="#c0c0c0"/><rect x="200" y="5" width="1.5" height="1.5" fill="#c0c0c0"/><rect x="202.5" y="2.5" width="1.5" height="1.5" fill="#c0c0c0"/><rect x="205" y="0" width="1.5" height="1.5" fill="#c0c0c0"/><rect x="205" y="5" width="1.5" height="1.5" fill="#c0c0c0"/><rect x="207.5" y="2.5" width="1.5" height="1.5" fill="#c0c0c0"/><rect x="210" y="0" width="1.5" height="1.5" fill="#c0c0c0"/><rect x="210" y="5" width="1.5" height="1.5" fill="#c0c0c0"/><rect x="212.5" y="2.5" width="1.5" height="1.5" fill="#c0c0c0"/><rect x="215" y="0" width="1.5" height="1.5" fill="#c0c0c0"/><rect x="215" y="5" width="1.5" height="1.5" fill="#c0c0c0"/><rect x="217.5" y="2.5" width="1.5" height="1.5" fill="#c0c0c0"/><rect x="220" y="0" width="1.5" height="1.5" fill="#c0c0c0"/><rect x="220" y="5" width="1.5" height="1.5" fill="#c0c0c0"/><rect x="222.5" y="2.5" width="1.5" height="1.5" fill="#c0c0c0"/><rect x="225" y="0" width="1.5" height="1.5" fill="#c0c0c0"/><rect x="225" y="5" width="1.5" height="1.5" fill="#c0c0c0"/><rect x="227.5" y="2.5" width="1.5" height="1.5" fill="#c0c0c0"/><rect x="230" y="0" width="1.5" height="1.5" fill="#c0c0c0"/><rect x="230" y="5" width="1.5" height="1.5" fill="#c0c0c0"/><rect x="232.5" y="2.5" width="1.5" height="1.5" fill="#c0c0c0"/><rect x="235" y="0" width="1.5" height="1.5" fill="#c0c0c0"/><rect x="235" y="5" width="1.5" height="1.5" fill="#c0c0c0"/><rect x="237.5" y="2.5" width="1.5" height="1.5" fill="#c0c0c0"/><rect x="240" y="0" width="1.5" height="1.5" fill="#c0c0c0"/><rect x="240" y="5" width="1.5" height="1.5" fill="#c0c0c0"/><rect x="242.5" y="2.5" width="1.5" height="1.5" fill="#c0c0c0"/><rect x="245" y="0" width="1.5" height="1.5" fill="#c0c0c0"/><rect x="245" y="5" width="1.5" height="1.5" fill="#c0c0c0"/><rect x="247.5" y="2.5" width="1.5" height="1.5" fill="#c0c0c0"/><rect x="250" y="0" width="1.5" height="1.5" fill="#c0c0c0"/><rect x="250" y="5" width="1.5" height="1.5" fill="#c0c0c0"/><rect x="252.5" y="2.5" width="1.5" height="1.5" fill="#c0c0c0"/><rect x="255" y="0" width="1.5" height="1.5" fill="#c0c0c0"/><rect x="255" y="5" width="1.5" height="1.5" fill="#c0c0c0"/><rect x="257.5" y="2.5" width="1.5" height="1.5" fill="#c0c0c0"/><rect x="260" y="0" width="1.5" height="1.5" fill="#c0c0c0"/><rect x="260" y="5" width="1.5" height="1.5" fill="#c0c0c0"/><rect x="262.5" y="2.5" width="1.5" height="1.5" fill="#c0c0c0"/><rect x="265" y="0" width="1.5" height="1.5" fill="#c0c0c0"/><rect x="265" y="5" width="1.5" height="1.5" fill="#c0c0c0"/><rect x="267.5" y="2.5" width="1.5" height="1.5" fill="#c0c0c0"/></svg>
<svg class="a" style="left:1861px;top:129px;" width="10" height="6" viewBox="0 0 10 6"><path d="M0 0 H10 L5 5.5Z" fill="#333"/></svg>
<svg class="a" style="left:1879px;top:125px;" width="10" height="13" viewBox="0 0 10 13"><path d="M2 0 H8 V1 H7 V6 L9 8 V9 H1 V8 L3 6 V1 H2Z" fill="#333"/><path d="M3.5 1 V6" stroke="#f0f0f0"/><rect x="4.5" y="9" width="1" height="4" fill="#333"/></svg>
<svg class="a" style="left:1896px;top:126px;" width="12" height="12" viewBox="0 0 12 12"><path d="M1.5 1.5 L10.5 10.5 M10.5 1.5 L1.5 10.5" stroke="#2a2a2a" stroke-width="2.4"/></svg>
<div class="a" style="left:1472px;top:145px;width:419px;height:45px;background:#f1f5f9"></div>
<svg class="a" style="left:1481px;top:157px;" width="21" height="16" viewBox="0 0 21 16"><path d="M0.5 8 L8 0.5 V5 H20 V11 H8 V15.5Z" fill="#2b8ad8"/></svg>
<svg class="a" style="left:1518px;top:157px;" width="21" height="16" viewBox="0 0 21 16"><path d="M20.5 8 L13 0.5 V5 H1 V11 H13 V15.5Z" fill="#2b8ad8"/></svg>
<div class="a" style="left:1550px;top:150px;width:1px;height:31px;background:#cfd3d8"></div>
<svg class="a" style="left:1562px;top:153px;" width="25" height="23" viewBox="0 0 25 23"><path d="M1 12 V22 M5 15 V22 M9 10 V22 M13 15 V22 M17 12 V22 M21 14 V22" stroke="#2b8ad8" stroke-width="2.2"/><path d="M0 22 H23" stroke="#2b8ad8" stroke-width="1.2"/><rect x="12" y="3" width="8" height="2.5" fill="#e04a3a"/></svg>
<svg class="a" style="left:1600px;top:153px;" width="25" height="23" viewBox="0 0 25 23"><path d="M1 12 V22 M5 15 V22 M9 10 V22 M13 15 V22 M17 12 V22 M21 14 V22" stroke="#2b8ad8" stroke-width="2.2"/><path d="M0 22 H23" stroke="#2b8ad8" stroke-width="1.2"/><path d="M16 0 V8 M12 4 H20" stroke="#2fb44a" stroke-width="2.4"/></svg>
<svg class="a" style="left:1637px;top:153px;" width="25" height="23" viewBox="0 0 25 23"><path d="M1 12 V22 M5 15 V22 M9 10 V22 M13 15 V22 M17 12 V22 M21 14 V22" stroke="#2b8ad8" stroke-width="2.2"/><path d="M0 22 H23" stroke="#2b8ad8" stroke-width="1.2"/><path d="M11 4 H22" stroke="#f29a22" stroke-width="1.6"/><path d="M10 4 L13 1.5 V6.5Z M23 4 L20 1.5 V6.5Z" fill="#f29a22"/></svg>
<svg class="a" style="left:1676px;top:154px;" width="22" height="22" viewBox="0 0 22 22"><path d="M2.5 2.5 L19.5 19.5 M19.5 2.5 L2.5 19.5" stroke="#d9432a" stroke-width="4.2" stroke-linecap="round"/></svg>
<div class="a" style="left:1891px;top:145px;width:19px;height:835px;background:#f0f0f0"></div>
<div class="a" style="left:1892px;top:167px;width:17px;height:691px;background:#cdcdcd"></div>
<svg class="a" style="left:1895px;top:152px;" width="12" height="8" viewBox="0 0 12 8"><path d="M1 7 L6 2 L11 7" stroke="#555" stroke-width="1.8" fill="none"/></svg>
<svg class="a" style="left:1895px;top:965px;" width="12" height="8" viewBox="0 0 12 8"><path d="M1 1 L6 6 L11 1" stroke="#555" stroke-width="1.8" fill="none"/></svg>
<div class="a" style="left:1482px;top:194px;width:399px;height:252px;border:1px solid #e6e8eb;border-radius:8px;background:#fff;overflow:hidden"><div style="position:absolute;left:0;top:0;width:100%;height:36px;background:linear-gradient(#eef3f7,#fbfcfd);border-bottom:1px solid #e6e8eb"></div></div>
<div class="t" style="left:1502.5px;top:206.07px;font-size:13.5px;color:#111;font-weight:bold">General</div>
<svg class="a" style="left:1860px;top:208.5px;" width="10" height="9" viewBox="0 0 10 9"><path d="M0 0 H10 L5 9Z" fill="#111"/></svg>
<div class="t" style="left:1503px;top:247.07px;font-size:13.5px;color:#333;font-weight:normal">Name</div>
<div class="a" style="left:1622px;top:244px;width:219px;height:27px;background:#fff;border:1px solid #dcdcdc"></div>
<div class="t" style="left:1626px;top:250.85px;font-size:14px;color:#111;font-weight:normal">Description</div>
<div class="t" style="left:1503px;top:288.07px;font-size:13.5px;color:#333;font-weight:normal">Data Type</div>
<div class="a" style="left:1622px;top:286px;width:219px;height:26px;background:#fff;border:1px solid #dcdcdc"></div>
<div class="t" style="left:1626px;top:292.35px;font-size:14px;color:#111;font-weight:normal">String</div>
<svg class="a" style="left:1825px;top:296.0px;" width="10" height="6" viewBox="0 0 10 6"><path d="M0.5 0.5 L5 5 L9.5 0.5" stroke="#666" stroke-width="1.1" fill="none"/></svg>
<div class="t" style="left:1503px;top:329.57px;font-size:13.5px;color:#333;font-weight:normal">Format</div>
<div class="a" style="left:1622px;top:327px;width:219px;height:26px;background:#e8e8e8;border:1px solid #dcdcdc"></div>
<svg class="a" style="left:1825px;top:337.0px;" width="10" height="6" viewBox="0 0 10 6"><path d="M0.5 0.5 L5 5 L9.5 0.5" stroke="#666" stroke-width="1.1" fill="none"/></svg>
<div class="t" style="left:1504px;top:371.07px;font-size:13.5px;color:#333;font-weight:normal">Composite Type</div>
<div class="a" style="left:1622px;top:368px;width:219px;height:26px;background:#fff;border:1px solid #dcdcdc"></div>
<div class="t" style="left:1626px;top:374.35px;font-size:14px;color:#111;font-weight:normal">None</div>
<svg class="a" style="left:1825px;top:378.0px;" width="10" height="6" viewBox="0 0 10 6"><path d="M0.5 0.5 L5 5 L9.5 0.5" stroke="#666" stroke-width="1.1" fill="none"/></svg>
<div class="t" style="left:1503px;top:411.57px;font-size:13.5px;color:#333;font-weight:normal">Value If Null</div>
<div class="a" style="left:1622px;top:409px;width:219px;height:26px;background:#fff;border:1px solid #dcdcdc"></div>
<div class="t" style="left:1626px;top:415.35px;font-size:14px;color:#111;font-weight:normal">None</div>
<svg class="a" style="left:1825px;top:419.0px;" width="10" height="6" viewBox="0 0 10 6"><path d="M0.5 0.5 L5 5 L9.5 0.5" stroke="#666" stroke-width="1.1" fill="none"/></svg>
<div class="a" style="left:1482px;top:461px;width:399px;height:175px;border:1px solid #e6e8eb;border-radius:8px;background:#fff;overflow:hidden"><div style="position:absolute;left:0;top:0;width:100%;height:35px;background:linear-gradient(#eef3f7,#fbfcfd);border-bottom:1px solid #e6e8eb"></div></div>
<div class="t" style="left:1502.5px;top:472.57px;font-size:13.5px;color:#111;font-weight:bold">Remove Options</div>
<svg class="a" style="left:1860px;top:475.0px;" width="10" height="9" viewBox="0 0 10 9"><path d="M0 0 H10 L5 9Z" fill="#111"/></svg>
<div class="a" style="left:1504px;top:510px;width:40px;height:36px;background:#f9f9f9;border:1px solid #e3e3e3;border-radius:7px;"></div>
<svg class="a" style="left:1514px;top:522px;overflow:visible" width="20" height="18" viewBox="0 0 20 18"><path d="M0 6 H9" stroke="#2c6fbf" stroke-width="3"/><path d="M11 2 L17 10 M17 2 L11 10" stroke="#2c6fbf" stroke-width="2.2"/></svg>
<div class="a" style="left:1563px;top:510px;width:40px;height:36px;background:#f9f9f9;border:1px solid #e3e3e3;border-radius:7px;"></div>
<svg class="a" style="left:1573px;top:522px;overflow:visible" width="20" height="18" viewBox="0 0 20 18"><g fill="#2c6fbf"><circle cx="4" cy="7.5" r="2.6"/><path d="M1.6 7 Q1.5 2.5 5 1 L5.4 2 Q3.4 3.2 3.6 6Z"/><circle cx="9.5" cy="7.5" r="2.6"/><path d="M7.1 7 Q7 2.5 10.5 1 L10.9 2 Q8.9 3.2 9.1 6Z"/><circle cx="15" cy="8" r="2"/><path d="M17 8 Q17 11.5 14 13 L13.6 12.2 Q15.2 11 15.3 9Z"/></g></svg>
<div class="a" style="left:1621px;top:510px;width:40px;height:36px;background:#f9f9f9;border:1px solid #e3e3e3;border-radius:7px;border-bottom:6px solid #f7941d;"></div>
<svg class="a" style="left:1631px;top:522px;overflow:visible" width="20" height="18" viewBox="0 0 20 18"><path d="M2 6 H16" stroke="#2c6fbf" stroke-width="2.4"/><path d="M0 6 L5 2 V10Z M18 6 L13 2 V10Z" fill="#2c6fbf"/></svg>
<div class="a" style="left:1680px;top:510px;width:40px;height:36px;background:#f9f9f9;border:1px solid #e3e3e3;border-radius:7px;border-bottom:6px solid #f7941d;"></div>
<svg class="a" style="left:1690px;top:522px;overflow:visible" width="20" height="18" viewBox="0 0 20 18"><path d="M1 1 V11 M18 1 V11" stroke="#2c6fbf" stroke-width="1.6"/><path d="M4 6 H15" stroke="#2c6fbf" stroke-width="2"/><path d="M3 6 L7 3 V9Z M16 6 L12 3 V9Z" fill="#2c6fbf"/></svg>
<div class="a" style="left:1739px;top:510px;width:40px;height:36px;background:#f9f9f9;border:1px solid #e3e3e3;border-radius:7px;"></div>
<svg class="a" style="left:1749px;top:522px;overflow:visible" width="20" height="18" viewBox="0 0 20 18"><path d="M0 6 H3 M15 6 H18" stroke="#2c6fbf" stroke-width="2.4"/><path d="M6 2 L12 10 M12 2 L6 10" stroke="#2c6fbf" stroke-width="2.2"/></svg>
<div class="a" style="left:1798px;top:510px;width:40px;height:36px;background:#f9f9f9;border:1px solid #e3e3e3;border-radius:7px;"></div>
<svg class="a" style="left:1808px;top:522px;overflow:visible" width="20" height="18" viewBox="0 0 20 18"><g fill="#2c6fbf"><circle cx="3.5" cy="6.5" r="2.2"/><path d="M1.4 6 Q1.4 2 4.5 0.8 L4.9 1.7 Q3.1 2.8 3.3 5Z"/><circle cx="8" cy="6.5" r="2.2"/><path d="M5.9 6 Q5.9 2 9 0.8 L9.4 1.7 Q7.6 2.8 7.8 5Z"/><circle cx="12.5" cy="8" r="2.2"/><path d="M14.6 8.5 Q14.6 12.5 11.5 13.7 L11.1 12.8 Q12.9 11.7 12.7 9.5Z"/><circle cx="17" cy="8" r="2.2"/><path d="M19.1 8.5 Q19.1 12.5 16 13.7 L15.6 12.8 Q17.4 11.7 17.2 9.5Z"/></g></svg>
<div class="t" style="left:1504px;top:574.57px;font-size:13.5px;color:#333;font-weight:normal">Specific Strings</div>
<div class="a" style="left:1500px;top:597px;width:331px;height:27px;background:#fff;border:1px solid #dcdcdc"></div>
<div class="t" style="left:1504px;top:603.85px;font-size:14px;color:#8a8a8a;font-weight:normal">None</div>
<svg class="a" style="left:1837px;top:601px;" width="16" height="16" viewBox="0 0 16 16"><circle cx="8" cy="8" r="7.5" fill="#d4d4d4"/><text x="8" y="13" font-family="Liberation Serif" font-style="italic" font-weight="bold" font-size="12" text-anchor="middle" fill="#fff">i</text></svg>
<div class="a" style="left:1482px;top:651px;width:399px;height:325px;border:1px solid #e6e8eb;border-radius:8px;background:#fff;overflow:hidden"><div style="position:absolute;left:0;top:0;width:100%;height:36px;background:linear-gradient(#eef3f7,#fbfcfd);border-bottom:1px solid #e6e8eb"></div></div>
<div class="t" style="left:1502.5px;top:663.07px;font-size:13.5px;color:#111;font-weight:bold">Size and Position</div>
<svg class="a" style="left:1860px;top:665.5px;" width="10" height="9" viewBox="0 0 10 9"><path d="M0 0 H10 L5 9Z" fill="#111"/></svg>
<div class="t" style="left:1503px;top:702.57px;font-size:13.5px;color:#333;font-weight:normal">Start Position</div>
<div class="a" style="left:1500px;top:727px;width:331px;height:26px;background:#fff;border:1px solid #dcdcdc"></div>
<div class="t" style="left:1504px;top:733.35px;font-size:14px;color:#111;font-weight:normal">Fixed</div>
<svg class="a" style="left:1815px;top:737.0px;" width="10" height="6" viewBox="0 0 10 6"><path d="M0.5 0.5 L5 5 L9.5 0.5" stroke="#666" stroke-width="1.1" fill="none"/></svg>
<div class="t" style="left:1503px;top:772.57px;font-size:13.5px;color:#333;font-weight:normal">Line</div>
<div class="a" style="left:1549px;top:767px;width:97px;height:27px;background:#fff;border:1px solid #dcdcdc"></div>
<div class="t" style="left:1552px;top:771.15px;font-size:14px;color:#111;font-weight:normal">0</div>
<svg class="a" style="left:1631px;top:771px;" width="10" height="18" viewBox="0 0 10 18"><path d="M1 6 L5 2 L9 6 M1 12 L5 16 L9 12" stroke="#555" stroke-width="1.2" fill="none"/></svg>
<div class="t" style="left:1658px;top:772.57px;font-size:13.5px;color:#333;font-weight:normal">Column</div>
<div class="a" style="left:1729px;top:767px;width:103px;height:27px;background:#fff;border:1px solid #dcdcdc"></div>
<div class="t" style="left:1732px;top:771.15px;font-size:14px;color:#111;font-weight:normal">0</div>
<svg class="a" style="left:1817px;top:771px;" width="10" height="18" viewBox="0 0 10 18"><path d="M1 6 L5 2 L9 6 M1 12 L5 16 L9 12" stroke="#555" stroke-width="1.2" fill="none"/></svg>
<div class="t" style="left:1503px;top:817.57px;font-size:13.5px;color:#333;font-weight:normal">Length</div>
<div class="a" style="left:1500px;top:844px;width:250px;height:25px;background:#fff;border:1px solid #dcdcdc"></div>
<div class="t" style="left:1504px;top:849.85px;font-size:14px;color:#111;font-weight:normal">Characters</div>
<svg class="a" style="left:1734px;top:853.5px;" width="10" height="6" viewBox="0 0 10 6"><path d="M0.5 0.5 L5 5 L9.5 0.5" stroke="#666" stroke-width="1.1" fill="none"/></svg>
<div class="a" style="left:1762px;top:844px;width:72px;height:27px;background:#fff;border:1px solid #dcdcdc"></div>
<div class="t" style="left:1765px;top:848.15px;font-size:14px;color:#111;font-weight:normal">32</div>
<svg class="a" style="left:1819px;top:848px;" width="10" height="18" viewBox="0 0 10 18"><path d="M1 6 L5 2 L9 6 M1 12 L5 16 L9 12" stroke="#555" stroke-width="1.2" fill="none"/></svg>
<div class="t" style="left:1503px;top:899.07px;font-size:13.5px;color:#333;font-weight:normal">Height</div>
<div class="a" style="left:1500px;top:923px;width:250px;height:25px;background:#fff;border:1px solid #dcdcdc"></div>
<div class="t" style="left:1504px;top:928.85px;font-size:14px;color:#111;font-weight:normal">Line Count</div>
<svg class="a" style="left:1734px;top:932.5px;" width="10" height="6" viewBox="0 0 10 6"><path d="M0.5 0.5 L5 5 L9.5 0.5" stroke="#666" stroke-width="1.1" fill="none"/></svg>
<div class="a" style="left:1761px;top:923px;width:71px;height:27px;background:#fff;border:1px solid #dcdcdc"></div>
<div class="t" style="left:1764px;top:927.15px;font-size:14px;color:#111;font-weight:normal">1</div>
<svg class="a" style="left:1817px;top:927px;" width="10" height="18" viewBox="0 0 10 18"><path d="M1 6 L5 2 L9 6 M1 12 L5 16 L9 12" stroke="#555" stroke-width="1.2" fill="none"/></svg>
<div class="a" style="left:1739px;top:981px;width:147px;height:38px;background:#c3c3c3"></div>
<div class="t" style="left:1477px;top:993.73px;font-size:14.5px;color:#333;font-weight:normal">Project Explorer</div>
<div class="t" style="left:1615px;top:993.73px;font-size:14.5px;color:#333;font-weight:normal">Server Explorer</div>
<div class="t" style="left:1746px;top:993.73px;font-size:14.5px;color:#333;font-weight:normal">Report Properties</div>
</body></html>
